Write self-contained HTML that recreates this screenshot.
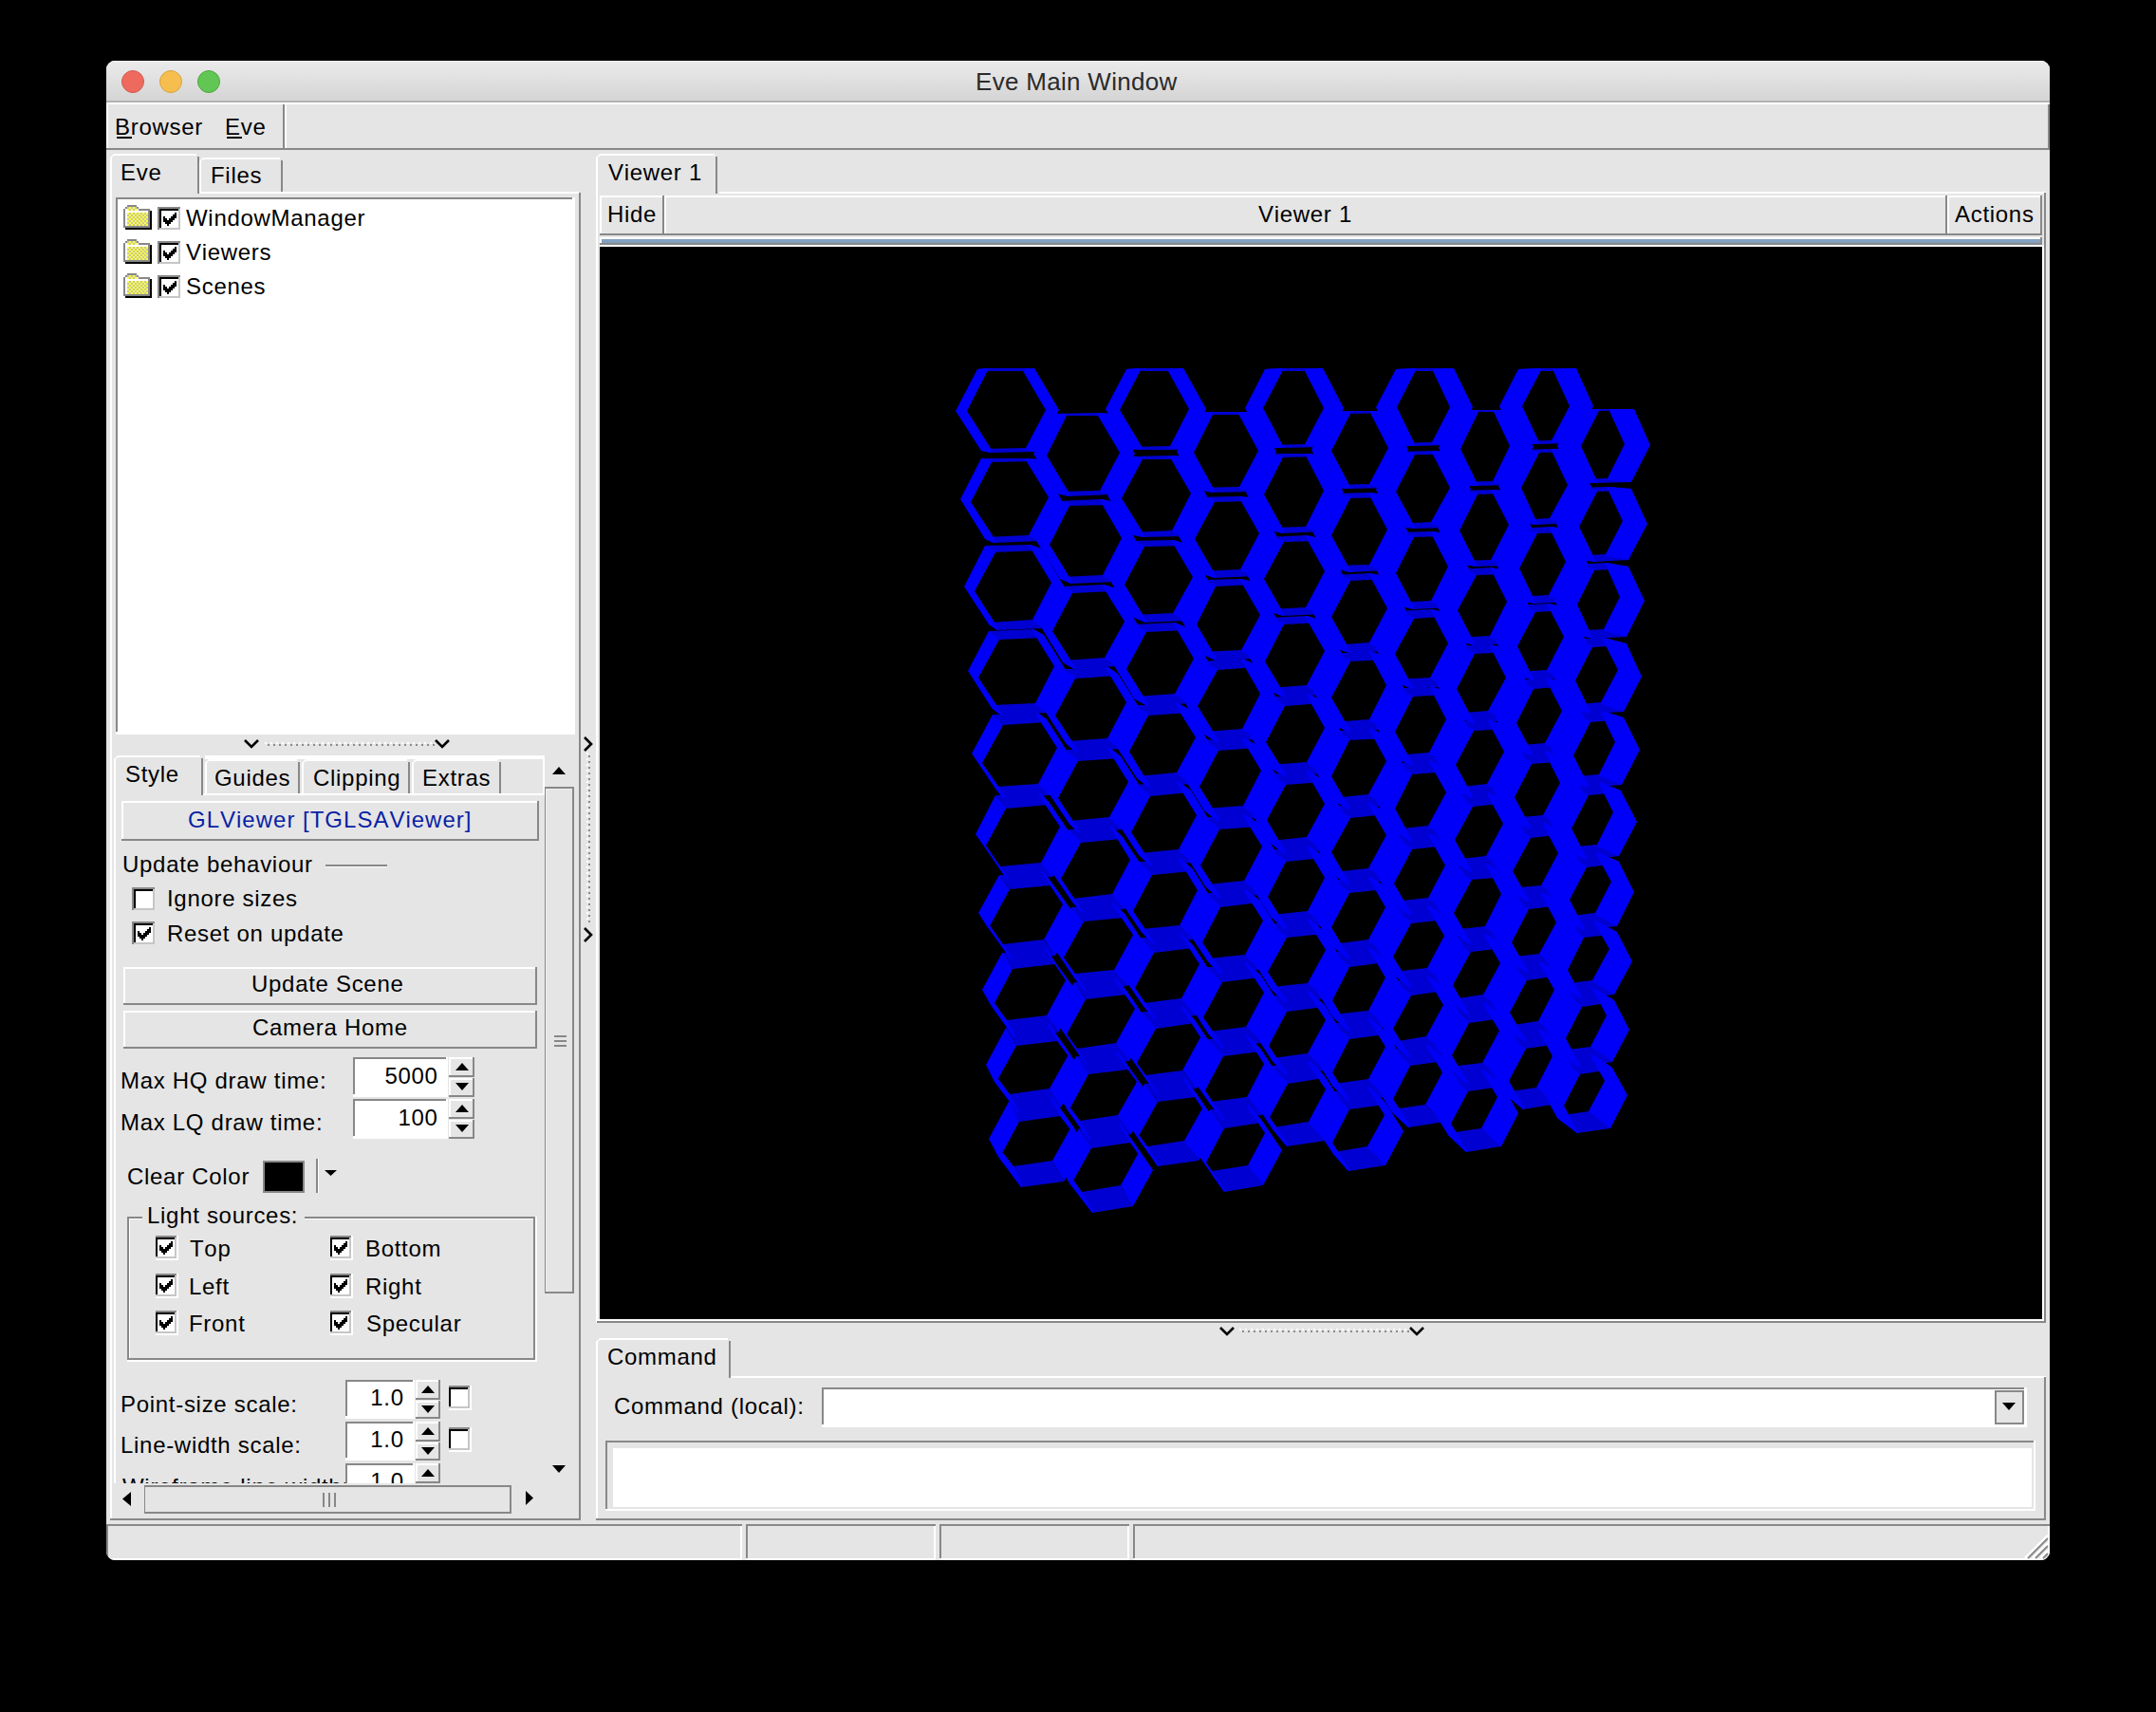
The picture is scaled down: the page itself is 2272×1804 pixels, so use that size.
<!DOCTYPE html>
<html><head><meta charset="utf-8"><style>
html,body{margin:0;padding:0;background:#000;width:2272px;height:1804px;overflow:hidden}
#w{position:absolute;left:112px;top:64px;width:2048px;height:1580px;background:#e5e5e5;border-radius:9px;overflow:hidden}
#w div{position:absolute}
#w .t{font-family:"Liberation Sans",sans-serif;line-height:24px;white-space:pre;font-kerning:none;height:30px}
</style></head><body><div id="w">
<div style="left:0px;top:0px;width:2048px;height:43px;background:linear-gradient(#ebebeb,#d4d4d4);"></div>
<div style="left:0px;top:0px;width:2048px;height:1px;background:#f6f6f6;"></div>
<div style="left:0px;top:42px;width:2048px;height:2px;background:#b1b1b1;"></div>
<div style="left:16px;top:10px;width:22px;height:22px;border-radius:50%;background:#ee6a5e;border:1px solid #d25a4d"></div>
<div style="left:56px;top:10px;width:22px;height:22px;border-radius:50%;background:#f5be4f;border:1px solid #d9a33c"></div>
<div style="left:96px;top:10px;width:22px;height:22px;border-radius:50%;background:#62c654;border:1px solid #4fa840"></div>
<div class="t" style="left:916px;top:10px;font-size:26px;color:#2b2b2b;letter-spacing:0.3px;">Eve Main Window</div>
<div style="left:0px;top:44px;width:2048px;height:2px;background:#ffffff;"></div>
<div style="left:0px;top:44px;width:2px;height:50px;background:#ffffff;"></div>
<div style="left:0px;top:92px;width:2048px;height:2px;background:#888888;"></div>
<div style="left:186px;top:46px;width:2px;height:46px;background:#888888;"></div>
<div style="left:188px;top:46px;width:2px;height:46px;background:#ffffff;"></div>
<div style="left:2046px;top:46px;width:2px;height:48px;background:#888888;"></div>
<div class="t" style="left:9px;top:58px;font-size:24px;color:#000;letter-spacing:0.7px;">Browser</div>
<div style="left:11px;top:80px;width:16px;height:2px;background:#000;"></div>
<div class="t" style="left:125px;top:58px;font-size:24px;color:#000;letter-spacing:0.7px;">Eve</div>
<div style="left:127px;top:80px;width:16px;height:2px;background:#000;"></div>
<svg style="position:absolute;left:4px;top:98px" width="94" height="42" viewBox="0 0 94 42" shape-rendering="crispEdges"><rect x="0" y="0" width="94" height="42" fill="#e5e5e5"/><rect x="4" y="0" width="87" height="2" fill="#fff"/><rect x="0" y="4" width="2" height="38" fill="#fff"/><path d="M0 4L4 0L4 2L2 4Z" fill="#fff" shape-rendering="geometricPrecision"/><rect x="92" y="3" width="2" height="39" fill="#888888"/></svg>
<svg style="position:absolute;left:98px;top:102px" width="88" height="38" viewBox="0 0 88 38" shape-rendering="crispEdges"><rect x="0" y="0" width="88" height="38" fill="#e5e5e5"/><rect x="4" y="0" width="81" height="2" fill="#fff"/><rect x="0" y="4" width="2" height="34" fill="#fff"/><path d="M0 4L4 0L4 2L2 4Z" fill="#fff" shape-rendering="geometricPrecision"/><rect x="86" y="3" width="2" height="35" fill="#888888"/></svg>
<div class="t" style="left:15px;top:106px;font-size:24px;color:#000;letter-spacing:0.7px;">Eve</div>
<div class="t" style="left:110px;top:109px;font-size:24px;color:#000;letter-spacing:0.7px;">Files</div>
<div style="left:98px;top:138px;width:400px;height:2px;background:#ffffff;"></div>
<div style="left:4px;top:140px;width:2px;height:1398px;background:#ffffff;"></div>
<div style="left:498px;top:139px;width:2px;height:1399px;background:#888888;"></div>
<div style="left:4px;top:1536px;width:496px;height:2px;background:#888888;"></div>
<div style="left:10px;top:144px;width:484px;height:566px;background:#fff;"></div>
<div style="left:10px;top:144px;width:481px;height:2px;background:#888888;"></div>
<div style="left:10px;top:144px;width:2px;height:563px;background:#888888;"></div>
<svg style="position:absolute;left:18px;top:152px" width="30" height="26" viewBox="0 0 30 26" shape-rendering="crispEdges"><defs><pattern id="ck" x="0" y="0" width="4" height="4" patternUnits="userSpaceOnUse"><rect width="4" height="4" fill="#c8c8a0"/><rect width="2" height="2" fill="#ffff40"/><rect x="2" y="2" width="2" height="2" fill="#ffff40"/></pattern></defs><rect x="4" y="0" width="10" height="2" fill="#888888"/><rect x="2" y="2" width="2" height="2" fill="#888888"/><rect x="14" y="2" width="2" height="2" fill="#888888"/><rect x="4" y="2" width="10" height="4" fill="url(#ck)"/><rect x="16" y="4" width="12" height="2" fill="#888888"/><rect x="0" y="4" width="2" height="20" fill="#888888"/><rect x="2" y="6" width="24" height="2" fill="#fff"/><rect x="2" y="6" width="2" height="16" fill="#fff"/><rect x="4" y="8" width="22" height="14" fill="url(#ck)"/><rect x="26" y="4" width="2" height="20" fill="#888888"/><rect x="0" y="22" width="28" height="2" fill="#888888"/><rect x="28" y="6" width="2" height="20" fill="#000"/><rect x="2" y="24" width="28" height="2" fill="#000"/></svg>
<svg style="position:absolute;left:54px;top:154px" width="24" height="24" viewBox="0 0 24 24" shape-rendering="crispEdges"><rect x="0" y="0" width="24" height="24" fill="#fff"/><rect x="0" y="0" width="24" height="2" fill="#888888"/><rect x="0" y="0" width="2" height="24" fill="#888888"/><rect x="2" y="2" width="20" height="2" fill="#000"/><rect x="2" y="2" width="2" height="20" fill="#000"/><rect x="22" y="2" width="2" height="22" fill="#c6c6c6"/><rect x="2" y="22" width="22" height="2" fill="#c6c6c6"/><path d="M18 6h2v2h-2zM16 8h4v2h-4zM6 10h2v2h-2zM14 10h6v2h-6zM6 12h4v2h-4zM12 12h6v2h-6zM6 14h10v2h-10zM8 16h6v2h-6zM10 18h2v2h-2z" fill="#000"/></svg>
<div class="t" style="left:84px;top:154px;font-size:24px;color:#000;letter-spacing:0.7px;">WindowManager</div>
<svg style="position:absolute;left:18px;top:188px" width="30" height="26" viewBox="0 0 30 26" shape-rendering="crispEdges"><rect x="4" y="0" width="10" height="2" fill="#888888"/><rect x="2" y="2" width="2" height="2" fill="#888888"/><rect x="14" y="2" width="2" height="2" fill="#888888"/><rect x="4" y="2" width="10" height="4" fill="url(#ck)"/><rect x="16" y="4" width="12" height="2" fill="#888888"/><rect x="0" y="4" width="2" height="20" fill="#888888"/><rect x="2" y="6" width="24" height="2" fill="#fff"/><rect x="2" y="6" width="2" height="16" fill="#fff"/><rect x="4" y="8" width="22" height="14" fill="url(#ck)"/><rect x="26" y="4" width="2" height="20" fill="#888888"/><rect x="0" y="22" width="28" height="2" fill="#888888"/><rect x="28" y="6" width="2" height="20" fill="#000"/><rect x="2" y="24" width="28" height="2" fill="#000"/></svg>
<svg style="position:absolute;left:54px;top:190px" width="24" height="24" viewBox="0 0 24 24" shape-rendering="crispEdges"><rect x="0" y="0" width="24" height="24" fill="#fff"/><rect x="0" y="0" width="24" height="2" fill="#888888"/><rect x="0" y="0" width="2" height="24" fill="#888888"/><rect x="2" y="2" width="20" height="2" fill="#000"/><rect x="2" y="2" width="2" height="20" fill="#000"/><rect x="22" y="2" width="2" height="22" fill="#c6c6c6"/><rect x="2" y="22" width="22" height="2" fill="#c6c6c6"/><path d="M18 6h2v2h-2zM16 8h4v2h-4zM6 10h2v2h-2zM14 10h6v2h-6zM6 12h4v2h-4zM12 12h6v2h-6zM6 14h10v2h-10zM8 16h6v2h-6zM10 18h2v2h-2z" fill="#000"/></svg>
<div class="t" style="left:84px;top:190px;font-size:24px;color:#000;letter-spacing:0.7px;">Viewers</div>
<svg style="position:absolute;left:18px;top:224px" width="30" height="26" viewBox="0 0 30 26" shape-rendering="crispEdges"><rect x="4" y="0" width="10" height="2" fill="#888888"/><rect x="2" y="2" width="2" height="2" fill="#888888"/><rect x="14" y="2" width="2" height="2" fill="#888888"/><rect x="4" y="2" width="10" height="4" fill="url(#ck)"/><rect x="16" y="4" width="12" height="2" fill="#888888"/><rect x="0" y="4" width="2" height="20" fill="#888888"/><rect x="2" y="6" width="24" height="2" fill="#fff"/><rect x="2" y="6" width="2" height="16" fill="#fff"/><rect x="4" y="8" width="22" height="14" fill="url(#ck)"/><rect x="26" y="4" width="2" height="20" fill="#888888"/><rect x="0" y="22" width="28" height="2" fill="#888888"/><rect x="28" y="6" width="2" height="20" fill="#000"/><rect x="2" y="24" width="28" height="2" fill="#000"/></svg>
<svg style="position:absolute;left:54px;top:226px" width="24" height="24" viewBox="0 0 24 24" shape-rendering="crispEdges"><rect x="0" y="0" width="24" height="24" fill="#fff"/><rect x="0" y="0" width="24" height="2" fill="#888888"/><rect x="0" y="0" width="2" height="24" fill="#888888"/><rect x="2" y="2" width="20" height="2" fill="#000"/><rect x="2" y="2" width="2" height="20" fill="#000"/><rect x="22" y="2" width="2" height="22" fill="#c6c6c6"/><rect x="2" y="22" width="22" height="2" fill="#c6c6c6"/><path d="M18 6h2v2h-2zM16 8h4v2h-4zM6 10h2v2h-2zM14 10h6v2h-6zM6 12h4v2h-4zM12 12h6v2h-6zM6 14h10v2h-10zM8 16h6v2h-6zM10 18h2v2h-2z" fill="#000"/></svg>
<div class="t" style="left:84px;top:226px;font-size:24px;color:#000;letter-spacing:0.7px;">Scenes</div>
<svg style="position:absolute;left:145px;top:715px" width="16" height="10" viewBox="0 0 16 10" shape-rendering="crispEdges"><path d="M1 1L8 8L15 1" stroke="#000" stroke-width="2.6" fill="none" shape-rendering="geometricPrecision"/></svg>
<svg style="position:absolute;left:346px;top:715px" width="16" height="10" viewBox="0 0 16 10" shape-rendering="crispEdges"><path d="M1 1L8 8L15 1" stroke="#000" stroke-width="2.6" fill="none" shape-rendering="geometricPrecision"/></svg>
<svg style="position:absolute;left:167px;top:718px" width="182" height="4" viewBox="0 0 182 4" shape-rendering="crispEdges"><rect x="0" y="0" width="2" height="2" fill="#fff"/><rect x="3" y="2" width="2" height="2" fill="#8c8c8c"/><rect x="6" y="0" width="2" height="2" fill="#fff"/><rect x="9" y="2" width="2" height="2" fill="#8c8c8c"/><rect x="12" y="0" width="2" height="2" fill="#fff"/><rect x="15" y="2" width="2" height="2" fill="#8c8c8c"/><rect x="18" y="0" width="2" height="2" fill="#fff"/><rect x="21" y="2" width="2" height="2" fill="#8c8c8c"/><rect x="24" y="0" width="2" height="2" fill="#fff"/><rect x="27" y="2" width="2" height="2" fill="#8c8c8c"/><rect x="30" y="0" width="2" height="2" fill="#fff"/><rect x="33" y="2" width="2" height="2" fill="#8c8c8c"/><rect x="36" y="0" width="2" height="2" fill="#fff"/><rect x="39" y="2" width="2" height="2" fill="#8c8c8c"/><rect x="42" y="0" width="2" height="2" fill="#fff"/><rect x="45" y="2" width="2" height="2" fill="#8c8c8c"/><rect x="48" y="0" width="2" height="2" fill="#fff"/><rect x="51" y="2" width="2" height="2" fill="#8c8c8c"/><rect x="54" y="0" width="2" height="2" fill="#fff"/><rect x="57" y="2" width="2" height="2" fill="#8c8c8c"/><rect x="60" y="0" width="2" height="2" fill="#fff"/><rect x="63" y="2" width="2" height="2" fill="#8c8c8c"/><rect x="66" y="0" width="2" height="2" fill="#fff"/><rect x="69" y="2" width="2" height="2" fill="#8c8c8c"/><rect x="72" y="0" width="2" height="2" fill="#fff"/><rect x="75" y="2" width="2" height="2" fill="#8c8c8c"/><rect x="78" y="0" width="2" height="2" fill="#fff"/><rect x="81" y="2" width="2" height="2" fill="#8c8c8c"/><rect x="84" y="0" width="2" height="2" fill="#fff"/><rect x="87" y="2" width="2" height="2" fill="#8c8c8c"/><rect x="90" y="0" width="2" height="2" fill="#fff"/><rect x="93" y="2" width="2" height="2" fill="#8c8c8c"/><rect x="96" y="0" width="2" height="2" fill="#fff"/><rect x="99" y="2" width="2" height="2" fill="#8c8c8c"/><rect x="102" y="0" width="2" height="2" fill="#fff"/><rect x="105" y="2" width="2" height="2" fill="#8c8c8c"/><rect x="108" y="0" width="2" height="2" fill="#fff"/><rect x="111" y="2" width="2" height="2" fill="#8c8c8c"/><rect x="114" y="0" width="2" height="2" fill="#fff"/><rect x="117" y="2" width="2" height="2" fill="#8c8c8c"/><rect x="120" y="0" width="2" height="2" fill="#fff"/><rect x="123" y="2" width="2" height="2" fill="#8c8c8c"/><rect x="126" y="0" width="2" height="2" fill="#fff"/><rect x="129" y="2" width="2" height="2" fill="#8c8c8c"/><rect x="132" y="0" width="2" height="2" fill="#fff"/><rect x="135" y="2" width="2" height="2" fill="#8c8c8c"/><rect x="138" y="0" width="2" height="2" fill="#fff"/><rect x="141" y="2" width="2" height="2" fill="#8c8c8c"/><rect x="144" y="0" width="2" height="2" fill="#fff"/><rect x="147" y="2" width="2" height="2" fill="#8c8c8c"/><rect x="150" y="0" width="2" height="2" fill="#fff"/><rect x="153" y="2" width="2" height="2" fill="#8c8c8c"/><rect x="156" y="0" width="2" height="2" fill="#fff"/><rect x="159" y="2" width="2" height="2" fill="#8c8c8c"/><rect x="162" y="0" width="2" height="2" fill="#fff"/><rect x="165" y="2" width="2" height="2" fill="#8c8c8c"/><rect x="168" y="0" width="2" height="2" fill="#fff"/><rect x="171" y="2" width="2" height="2" fill="#8c8c8c"/><rect x="174" y="0" width="2" height="2" fill="#fff"/><rect x="177" y="2" width="2" height="2" fill="#8c8c8c"/></svg>
<div style="left:104px;top:732px;width:358px;height:4px;background:#ffffff;"></div>
<div style="left:460px;top:732px;width:2px;height:42px;background:#ffffff;"></div>
<div style="left:102px;top:772px;width:360px;height:2px;background:#ffffff;"></div>
<svg style="position:absolute;left:8px;top:732px" width="94" height="42" viewBox="0 0 94 42" shape-rendering="crispEdges"><rect x="0" y="0" width="94" height="42" fill="#e5e5e5"/><rect x="4" y="0" width="87" height="2" fill="#fff"/><rect x="0" y="4" width="2" height="38" fill="#fff"/><path d="M0 4L4 0L4 2L2 4Z" fill="#fff" shape-rendering="geometricPrecision"/><rect x="92" y="3" width="2" height="39" fill="#888888"/></svg>
<svg style="position:absolute;left:104px;top:736px" width="100" height="36" viewBox="0 0 100 36" shape-rendering="crispEdges"><rect x="0" y="0" width="100" height="36" fill="#e5e5e5"/><rect x="4" y="0" width="93" height="2" fill="#fff"/><rect x="0" y="4" width="2" height="32" fill="#fff"/><path d="M0 4L4 0L4 2L2 4Z" fill="#fff" shape-rendering="geometricPrecision"/><rect x="98" y="3" width="2" height="33" fill="#888888"/></svg>
<svg style="position:absolute;left:206px;top:736px" width="114" height="36" viewBox="0 0 114 36" shape-rendering="crispEdges"><rect x="0" y="0" width="114" height="36" fill="#e5e5e5"/><rect x="4" y="0" width="107" height="2" fill="#fff"/><rect x="0" y="4" width="2" height="32" fill="#fff"/><path d="M0 4L4 0L4 2L2 4Z" fill="#fff" shape-rendering="geometricPrecision"/><rect x="112" y="3" width="2" height="33" fill="#888888"/></svg>
<svg style="position:absolute;left:322px;top:736px" width="94" height="36" viewBox="0 0 94 36" shape-rendering="crispEdges"><rect x="0" y="0" width="94" height="36" fill="#e5e5e5"/><rect x="4" y="0" width="87" height="2" fill="#fff"/><rect x="0" y="4" width="2" height="32" fill="#fff"/><path d="M0 4L4 0L4 2L2 4Z" fill="#fff" shape-rendering="geometricPrecision"/><rect x="92" y="3" width="2" height="33" fill="#888888"/></svg>
<div class="t" style="left:20px;top:740px;font-size:24px;color:#000;letter-spacing:0.7px;">Style</div>
<div class="t" style="left:114px;top:744px;font-size:24px;color:#000;letter-spacing:0.7px;">Guides</div>
<div class="t" style="left:218px;top:744px;font-size:24px;color:#000;letter-spacing:0.7px;">Clipping</div>
<div class="t" style="left:333px;top:744px;font-size:24px;color:#000;letter-spacing:0.7px;">Extras</div>
<div style="left:8px;top:774px;width:2px;height:725px;background:#ffffff;"></div>
<div style="left:16px;top:780px;width:440px;height:2px;background:#ffffff;"></div>
<div style="left:16px;top:780px;width:2px;height:42px;background:#ffffff;"></div>
<div style="left:16px;top:820px;width:440px;height:2px;background:#888888;"></div>
<div style="left:454px;top:780px;width:2px;height:42px;background:#888888;"></div>
<div class="t" style="left:86px;top:788px;font-size:24px;color:#0a1fa6;letter-spacing:1.0px;">GLViewer [TGLSAViewer]</div>
<div class="t" style="left:17px;top:835px;font-size:24px;color:#000;letter-spacing:0.7px;">Update behaviour</div>
<div style="left:231px;top:847px;width:65px;height:2px;background:#888888;"></div>
<div style="left:231px;top:849px;width:65px;height:1px;background:#ffffff;"></div>
<svg style="position:absolute;left:27px;top:871px" width="24" height="24" viewBox="0 0 24 24" shape-rendering="crispEdges"><rect x="0" y="0" width="24" height="24" fill="#fff"/><rect x="0" y="0" width="24" height="2" fill="#888888"/><rect x="0" y="0" width="2" height="24" fill="#888888"/><rect x="2" y="2" width="20" height="2" fill="#000"/><rect x="2" y="2" width="2" height="20" fill="#000"/><rect x="22" y="2" width="2" height="22" fill="#c6c6c6"/><rect x="2" y="22" width="22" height="2" fill="#c6c6c6"/></svg>
<div class="t" style="left:64px;top:871px;font-size:24px;color:#000;letter-spacing:0.7px;">Ignore sizes</div>
<svg style="position:absolute;left:27px;top:907px" width="24" height="24" viewBox="0 0 24 24" shape-rendering="crispEdges"><rect x="0" y="0" width="24" height="24" fill="#fff"/><rect x="0" y="0" width="24" height="2" fill="#888888"/><rect x="0" y="0" width="2" height="24" fill="#888888"/><rect x="2" y="2" width="20" height="2" fill="#000"/><rect x="2" y="2" width="2" height="20" fill="#000"/><rect x="22" y="2" width="2" height="22" fill="#c6c6c6"/><rect x="2" y="22" width="22" height="2" fill="#c6c6c6"/><path d="M18 6h2v2h-2zM16 8h4v2h-4zM6 10h2v2h-2zM14 10h6v2h-6zM6 12h4v2h-4zM12 12h6v2h-6zM6 14h10v2h-10zM8 16h6v2h-6zM10 18h2v2h-2z" fill="#000"/></svg>
<div class="t" style="left:64px;top:908px;font-size:24px;color:#000;letter-spacing:0.7px;">Reset on update</div>
<div style="left:18px;top:955px;width:436px;height:2px;background:#ffffff;"></div>
<div style="left:18px;top:955px;width:2px;height:40px;background:#ffffff;"></div>
<div style="left:18px;top:993px;width:436px;height:2px;background:#888888;"></div>
<div style="left:452px;top:955px;width:2px;height:40px;background:#888888;"></div>
<div class="t" style="left:153px;top:961px;font-size:24px;color:#000;letter-spacing:0.7px;">Update Scene</div>
<div style="left:18px;top:1001px;width:436px;height:2px;background:#ffffff;"></div>
<div style="left:18px;top:1001px;width:2px;height:40px;background:#ffffff;"></div>
<div style="left:18px;top:1039px;width:436px;height:2px;background:#888888;"></div>
<div style="left:452px;top:1001px;width:2px;height:40px;background:#888888;"></div>
<div class="t" style="left:154px;top:1007px;font-size:24px;color:#000;letter-spacing:0.7px;">Camera Home</div>
<div class="t" style="left:15px;top:1063px;font-size:24px;color:#000;letter-spacing:0.7px;">Max HQ draw time:</div>
<div style="left:260px;top:1050px;width:100px;height:42px;background:#fff;"></div>
<div style="left:260px;top:1050px;width:98px;height:2px;background:#888888;"></div>
<div style="left:260px;top:1050px;width:2px;height:39px;background:#888888;"></div>
<div class="t" style="left:49.6px;width:300px;text-align:right;top:1058px;font-size:24px;color:#000;letter-spacing:0.7px;">5000</div>
<div style="left:361px;top:1050px;width:27px;height:21px;background:#e5e5e5;"></div>
<div style="left:361px;top:1050px;width:27px;height:2px;background:#ffffff;"></div>
<div style="left:361px;top:1050px;width:2px;height:21px;background:#ffffff;"></div>
<div style="left:361px;top:1069px;width:27px;height:2px;background:#888888;"></div>
<div style="left:386px;top:1050px;width:2px;height:21px;background:#888888;"></div>
<div style="left:361px;top:1072px;width:27px;height:20px;background:#e5e5e5;"></div>
<div style="left:361px;top:1072px;width:27px;height:2px;background:#ffffff;"></div>
<div style="left:361px;top:1072px;width:2px;height:20px;background:#ffffff;"></div>
<div style="left:361px;top:1090px;width:27px;height:2px;background:#888888;"></div>
<div style="left:386px;top:1072px;width:2px;height:20px;background:#888888;"></div>
<svg style="position:absolute;left:367.5px;top:1056px" width="14" height="8" viewBox="0 0 14 8" shape-rendering="crispEdges"><path d="M0 8L7.0 0L14 8Z" fill="#000" shape-rendering="geometricPrecision"/></svg>
<svg style="position:absolute;left:367.5px;top:1077px" width="14" height="8" viewBox="0 0 14 8" shape-rendering="crispEdges"><path d="M0 0L14 0L7.0 8Z" fill="#000" shape-rendering="geometricPrecision"/></svg>
<div class="t" style="left:15px;top:1107px;font-size:24px;color:#000;letter-spacing:0.7px;">Max LQ draw time:</div>
<div style="left:260px;top:1094px;width:100px;height:42px;background:#fff;"></div>
<div style="left:260px;top:1094px;width:98px;height:2px;background:#888888;"></div>
<div style="left:260px;top:1094px;width:2px;height:39px;background:#888888;"></div>
<div class="t" style="left:49.6px;width:300px;text-align:right;top:1102px;font-size:24px;color:#000;letter-spacing:0.7px;">100</div>
<div style="left:361px;top:1094px;width:27px;height:21px;background:#e5e5e5;"></div>
<div style="left:361px;top:1094px;width:27px;height:2px;background:#ffffff;"></div>
<div style="left:361px;top:1094px;width:2px;height:21px;background:#ffffff;"></div>
<div style="left:361px;top:1113px;width:27px;height:2px;background:#888888;"></div>
<div style="left:386px;top:1094px;width:2px;height:21px;background:#888888;"></div>
<div style="left:361px;top:1116px;width:27px;height:20px;background:#e5e5e5;"></div>
<div style="left:361px;top:1116px;width:27px;height:2px;background:#ffffff;"></div>
<div style="left:361px;top:1116px;width:2px;height:20px;background:#ffffff;"></div>
<div style="left:361px;top:1134px;width:27px;height:2px;background:#888888;"></div>
<div style="left:386px;top:1116px;width:2px;height:20px;background:#888888;"></div>
<svg style="position:absolute;left:367.5px;top:1100px" width="14" height="8" viewBox="0 0 14 8" shape-rendering="crispEdges"><path d="M0 8L7.0 0L14 8Z" fill="#000" shape-rendering="geometricPrecision"/></svg>
<svg style="position:absolute;left:367.5px;top:1121px" width="14" height="8" viewBox="0 0 14 8" shape-rendering="crispEdges"><path d="M0 0L14 0L7.0 8Z" fill="#000" shape-rendering="geometricPrecision"/></svg>
<div class="t" style="left:22px;top:1164px;font-size:24px;color:#000;letter-spacing:0.7px;">Clear Color</div>
<div style="left:165px;top:1159px;width:44px;height:34px;background:#888888;"></div>
<div style="left:167px;top:1161px;width:40px;height:30px;background:#000;"></div>
<div style="left:221px;top:1157px;width:2px;height:36px;background:#888888;"></div>
<div style="left:223px;top:1157px;width:1px;height:36px;background:#ffffff;"></div>
<svg style="position:absolute;left:230px;top:1169px" width="13" height="6" viewBox="0 0 13 6" shape-rendering="crispEdges"><path d="M0 0L13 0L6.5 6Z" fill="#000" shape-rendering="geometricPrecision"/></svg>
<div style="left:22px;top:1218px;width:430px;height:2px;background:#888888;"></div>
<div style="left:22px;top:1220px;width:430px;height:1px;background:#ffffff;"></div>
<div style="left:22px;top:1218px;width:2px;height:151px;background:#888888;"></div>
<div style="left:24px;top:1220px;width:1px;height:149px;background:#ffffff;"></div>
<div style="left:22px;top:1367px;width:430px;height:2px;background:#888888;"></div>
<div style="left:22px;top:1369px;width:432px;height:2px;background:#ffffff;"></div>
<div style="left:450px;top:1218px;width:2px;height:151px;background:#888888;"></div>
<div style="left:452px;top:1218px;width:2px;height:153px;background:#ffffff;"></div>
<div style="left:38px;top:1206px;width:171px;height:20px;background:#e5e5e5;"></div>
<div class="t" style="left:43px;top:1205px;font-size:24px;color:#000;letter-spacing:0.7px;">Light sources:</div>
<svg style="position:absolute;left:52px;top:1238px" width="24" height="26" viewBox="0 0 24 26" shape-rendering="crispEdges"><rect x="0" y="0" width="24" height="26" fill="#fff"/><rect x="0" y="0" width="22" height="2" fill="#888888"/><rect x="0" y="2" width="20" height="2" fill="#000"/><rect x="0" y="2" width="2" height="20" fill="#000"/><rect x="20" y="2" width="2" height="22" fill="#c6c6c6"/><rect x="0" y="22" width="22" height="2" fill="#c6c6c6"/><rect x="22" y="0" width="2" height="26" fill="#fff"/><rect x="0" y="24" width="24" height="2" fill="#fff"/><path d="M16 6h2v2h-2zM14 8h4v2h-4zM4 10h2v2h-2zM12 10h6v2h-6zM4 12h4v2h-4zM10 12h6v2h-6zM4 14h10v2h-10zM6 16h6v2h-6zM8 18h2v2h-2z" fill="#000"/></svg>
<div class="t" style="left:88px;top:1240px;font-size:24px;color:#000;letter-spacing:0.7px;">Top</div>
<svg style="position:absolute;left:236px;top:1238px" width="24" height="26" viewBox="0 0 24 26" shape-rendering="crispEdges"><rect x="0" y="0" width="24" height="26" fill="#fff"/><rect x="0" y="0" width="22" height="2" fill="#888888"/><rect x="0" y="2" width="20" height="2" fill="#000"/><rect x="0" y="2" width="2" height="20" fill="#000"/><rect x="20" y="2" width="2" height="22" fill="#c6c6c6"/><rect x="0" y="22" width="22" height="2" fill="#c6c6c6"/><rect x="22" y="0" width="2" height="26" fill="#fff"/><rect x="0" y="24" width="24" height="2" fill="#fff"/><path d="M16 6h2v2h-2zM14 8h4v2h-4zM4 10h2v2h-2zM12 10h6v2h-6zM4 12h4v2h-4zM10 12h6v2h-6zM4 14h10v2h-10zM6 16h6v2h-6zM8 18h2v2h-2z" fill="#000"/></svg>
<div class="t" style="left:273px;top:1240px;font-size:24px;color:#000;letter-spacing:0.7px;">Bottom</div>
<svg style="position:absolute;left:52px;top:1278px" width="24" height="26" viewBox="0 0 24 26" shape-rendering="crispEdges"><rect x="0" y="0" width="24" height="26" fill="#fff"/><rect x="0" y="0" width="22" height="2" fill="#888888"/><rect x="0" y="2" width="20" height="2" fill="#000"/><rect x="0" y="2" width="2" height="20" fill="#000"/><rect x="20" y="2" width="2" height="22" fill="#c6c6c6"/><rect x="0" y="22" width="22" height="2" fill="#c6c6c6"/><rect x="22" y="0" width="2" height="26" fill="#fff"/><rect x="0" y="24" width="24" height="2" fill="#fff"/><path d="M16 6h2v2h-2zM14 8h4v2h-4zM4 10h2v2h-2zM12 10h6v2h-6zM4 12h4v2h-4zM10 12h6v2h-6zM4 14h10v2h-10zM6 16h6v2h-6zM8 18h2v2h-2z" fill="#000"/></svg>
<div class="t" style="left:87px;top:1280px;font-size:24px;color:#000;letter-spacing:0.7px;">Left</div>
<svg style="position:absolute;left:236px;top:1278px" width="24" height="26" viewBox="0 0 24 26" shape-rendering="crispEdges"><rect x="0" y="0" width="24" height="26" fill="#fff"/><rect x="0" y="0" width="22" height="2" fill="#888888"/><rect x="0" y="2" width="20" height="2" fill="#000"/><rect x="0" y="2" width="2" height="20" fill="#000"/><rect x="20" y="2" width="2" height="22" fill="#c6c6c6"/><rect x="0" y="22" width="22" height="2" fill="#c6c6c6"/><rect x="22" y="0" width="2" height="26" fill="#fff"/><rect x="0" y="24" width="24" height="2" fill="#fff"/><path d="M16 6h2v2h-2zM14 8h4v2h-4zM4 10h2v2h-2zM12 10h6v2h-6zM4 12h4v2h-4zM10 12h6v2h-6zM4 14h10v2h-10zM6 16h6v2h-6zM8 18h2v2h-2z" fill="#000"/></svg>
<div class="t" style="left:273px;top:1280px;font-size:24px;color:#000;letter-spacing:0.7px;">Right</div>
<svg style="position:absolute;left:52px;top:1317px" width="24" height="26" viewBox="0 0 24 26" shape-rendering="crispEdges"><rect x="0" y="0" width="24" height="26" fill="#fff"/><rect x="0" y="0" width="22" height="2" fill="#888888"/><rect x="0" y="2" width="20" height="2" fill="#000"/><rect x="0" y="2" width="2" height="20" fill="#000"/><rect x="20" y="2" width="2" height="22" fill="#c6c6c6"/><rect x="0" y="22" width="22" height="2" fill="#c6c6c6"/><rect x="22" y="0" width="2" height="26" fill="#fff"/><rect x="0" y="24" width="24" height="2" fill="#fff"/><path d="M16 6h2v2h-2zM14 8h4v2h-4zM4 10h2v2h-2zM12 10h6v2h-6zM4 12h4v2h-4zM10 12h6v2h-6zM4 14h10v2h-10zM6 16h6v2h-6zM8 18h2v2h-2z" fill="#000"/></svg>
<div class="t" style="left:87px;top:1319px;font-size:24px;color:#000;letter-spacing:0.7px;">Front</div>
<svg style="position:absolute;left:236px;top:1317px" width="24" height="26" viewBox="0 0 24 26" shape-rendering="crispEdges"><rect x="0" y="0" width="24" height="26" fill="#fff"/><rect x="0" y="0" width="22" height="2" fill="#888888"/><rect x="0" y="2" width="20" height="2" fill="#000"/><rect x="0" y="2" width="2" height="20" fill="#000"/><rect x="20" y="2" width="2" height="22" fill="#c6c6c6"/><rect x="0" y="22" width="22" height="2" fill="#c6c6c6"/><rect x="22" y="0" width="2" height="26" fill="#fff"/><rect x="0" y="24" width="24" height="2" fill="#fff"/><path d="M16 6h2v2h-2zM14 8h4v2h-4zM4 10h2v2h-2zM12 10h6v2h-6zM4 12h4v2h-4zM10 12h6v2h-6zM4 14h10v2h-10zM6 16h6v2h-6zM8 18h2v2h-2z" fill="#000"/></svg>
<div class="t" style="left:274px;top:1319px;font-size:24px;color:#000;letter-spacing:0.7px;">Specular</div>
<div style="left:6px;top:1376px;width:455px;height:123px;overflow:hidden">
<div class="t" style="left:9px;top:28px;font-size:24px;color:#000;letter-spacing:0.7px;">Point-size scale:</div>
<div style="left:246px;top:14px;width:73px;height:41px;background:#fff;"></div>
<div style="left:246px;top:14px;width:71px;height:2px;background:#888888;"></div>
<div style="left:246px;top:14px;width:2px;height:38px;background:#888888;"></div>
<div class="t" style="left:7.7px;width:300px;text-align:right;top:21px;font-size:24px;color:#000;letter-spacing:0.7px;">1.0</div>
<div style="left:320px;top:14px;width:26px;height:20.5px;background:#e5e5e5;"></div>
<div style="left:320px;top:14px;width:26px;height:2px;background:#ffffff;"></div>
<div style="left:320px;top:14px;width:2px;height:20.5px;background:#ffffff;"></div>
<div style="left:320px;top:32.5px;width:26px;height:2px;background:#888888;"></div>
<div style="left:344px;top:14px;width:2px;height:20.5px;background:#888888;"></div>
<div style="left:320px;top:35.5px;width:26px;height:19.5px;background:#e5e5e5;"></div>
<div style="left:320px;top:35.5px;width:26px;height:2px;background:#ffffff;"></div>
<div style="left:320px;top:35.5px;width:2px;height:19.5px;background:#ffffff;"></div>
<div style="left:320px;top:53px;width:26px;height:2px;background:#888888;"></div>
<div style="left:344px;top:35.5px;width:2px;height:19.5px;background:#888888;"></div>
<svg style="position:absolute;left:326px;top:20px" width="14" height="8" viewBox="0 0 14 8" shape-rendering="crispEdges"><path d="M0 8L7.0 0L14 8Z" fill="#000" shape-rendering="geometricPrecision"/></svg>
<svg style="position:absolute;left:326px;top:40.5px" width="14" height="8" viewBox="0 0 14 8" shape-rendering="crispEdges"><path d="M0 0L14 0L7.0 8Z" fill="#000" shape-rendering="geometricPrecision"/></svg>
<svg style="position:absolute;left:355px;top:20px" width="24" height="26" viewBox="0 0 24 26" shape-rendering="crispEdges"><rect x="0" y="0" width="24" height="26" fill="#fff"/><rect x="0" y="0" width="22" height="2" fill="#888888"/><rect x="0" y="2" width="20" height="2" fill="#000"/><rect x="0" y="2" width="2" height="20" fill="#000"/><rect x="20" y="2" width="2" height="22" fill="#c6c6c6"/><rect x="0" y="22" width="22" height="2" fill="#c6c6c6"/><rect x="22" y="0" width="2" height="26" fill="#fff"/><rect x="0" y="24" width="24" height="2" fill="#fff"/></svg>
<div class="t" style="left:9px;top:71px;font-size:24px;color:#000;letter-spacing:0.7px;">Line-width scale:</div>
<div style="left:246px;top:58px;width:73px;height:41px;background:#fff;"></div>
<div style="left:246px;top:58px;width:71px;height:2px;background:#888888;"></div>
<div style="left:246px;top:58px;width:2px;height:38px;background:#888888;"></div>
<div class="t" style="left:7.7px;width:300px;text-align:right;top:65px;font-size:24px;color:#000;letter-spacing:0.7px;">1.0</div>
<div style="left:320px;top:58px;width:26px;height:20.5px;background:#e5e5e5;"></div>
<div style="left:320px;top:58px;width:26px;height:2px;background:#ffffff;"></div>
<div style="left:320px;top:58px;width:2px;height:20.5px;background:#ffffff;"></div>
<div style="left:320px;top:76.5px;width:26px;height:2px;background:#888888;"></div>
<div style="left:344px;top:58px;width:2px;height:20.5px;background:#888888;"></div>
<div style="left:320px;top:79.5px;width:26px;height:19.5px;background:#e5e5e5;"></div>
<div style="left:320px;top:79.5px;width:26px;height:2px;background:#ffffff;"></div>
<div style="left:320px;top:79.5px;width:2px;height:19.5px;background:#ffffff;"></div>
<div style="left:320px;top:97px;width:26px;height:2px;background:#888888;"></div>
<div style="left:344px;top:79.5px;width:2px;height:19.5px;background:#888888;"></div>
<svg style="position:absolute;left:326px;top:64px" width="14" height="8" viewBox="0 0 14 8" shape-rendering="crispEdges"><path d="M0 8L7.0 0L14 8Z" fill="#000" shape-rendering="geometricPrecision"/></svg>
<svg style="position:absolute;left:326px;top:84.5px" width="14" height="8" viewBox="0 0 14 8" shape-rendering="crispEdges"><path d="M0 0L14 0L7.0 8Z" fill="#000" shape-rendering="geometricPrecision"/></svg>
<svg style="position:absolute;left:355px;top:64px" width="24" height="26" viewBox="0 0 24 26" shape-rendering="crispEdges"><rect x="0" y="0" width="24" height="26" fill="#fff"/><rect x="0" y="0" width="22" height="2" fill="#888888"/><rect x="0" y="2" width="20" height="2" fill="#000"/><rect x="0" y="2" width="2" height="20" fill="#000"/><rect x="20" y="2" width="2" height="22" fill="#c6c6c6"/><rect x="0" y="22" width="22" height="2" fill="#c6c6c6"/><rect x="22" y="0" width="2" height="26" fill="#fff"/><rect x="0" y="24" width="24" height="2" fill="#fff"/></svg>
<div class="t" style="left:11px;top:115px;font-size:24px;color:#000;letter-spacing:0.7px;">Wireframe line width:</div>
<div style="left:246px;top:102px;width:73px;height:41px;background:#fff;"></div>
<div style="left:246px;top:102px;width:71px;height:2px;background:#888888;"></div>
<div style="left:246px;top:102px;width:2px;height:38px;background:#888888;"></div>
<div class="t" style="left:7.7px;width:300px;text-align:right;top:109px;font-size:24px;color:#000;letter-spacing:0.7px;">1.0</div>
<div style="left:320px;top:102px;width:26px;height:20.5px;background:#e5e5e5;"></div>
<div style="left:320px;top:102px;width:26px;height:2px;background:#ffffff;"></div>
<div style="left:320px;top:102px;width:2px;height:20.5px;background:#ffffff;"></div>
<div style="left:320px;top:120.5px;width:26px;height:2px;background:#888888;"></div>
<div style="left:344px;top:102px;width:2px;height:20.5px;background:#888888;"></div>
<div style="left:320px;top:123.5px;width:26px;height:19.5px;background:#e5e5e5;"></div>
<div style="left:320px;top:123.5px;width:26px;height:2px;background:#ffffff;"></div>
<div style="left:320px;top:123.5px;width:2px;height:19.5px;background:#ffffff;"></div>
<div style="left:320px;top:141px;width:26px;height:2px;background:#888888;"></div>
<div style="left:344px;top:123.5px;width:2px;height:19.5px;background:#888888;"></div>
<svg style="position:absolute;left:326px;top:108px" width="14" height="8" viewBox="0 0 14 8" shape-rendering="crispEdges"><path d="M0 8L7.0 0L14 8Z" fill="#000" shape-rendering="geometricPrecision"/></svg>
<svg style="position:absolute;left:326px;top:128.5px" width="14" height="8" viewBox="0 0 14 8" shape-rendering="crispEdges"><path d="M0 0L14 0L7.0 8Z" fill="#000" shape-rendering="geometricPrecision"/></svg>
</div>
<svg style="position:absolute;left:470px;top:744px" width="14" height="8" viewBox="0 0 14 8" shape-rendering="crispEdges"><path d="M0 8L7.0 0L14 8Z" fill="#000" shape-rendering="geometricPrecision"/></svg>
<div style="left:462px;top:765px;width:31px;height:534px;background:#888888;"></div>
<div style="left:463px;top:767px;width:28px;height:530px;background:#f0f0f0;"></div>
<div style="left:464px;top:768px;width:27px;height:529px;background:#e5e5e5;"></div>
<div style="left:472px;top:1027px;width:13px;height:2px;background:#888888;"></div>
<div style="left:472px;top:1032px;width:13px;height:2px;background:#888888;"></div>
<div style="left:472px;top:1037px;width:13px;height:2px;background:#888888;"></div>
<svg style="position:absolute;left:470px;top:1480px" width="14" height="8" viewBox="0 0 14 8" shape-rendering="crispEdges"><path d="M0 0L14 0L7.0 8Z" fill="#000" shape-rendering="geometricPrecision"/></svg>
<svg style="position:absolute;left:17px;top:1508px" width="9" height="15" viewBox="0 0 9 15" shape-rendering="crispEdges"><path d="M9 0L0 7.5L9 15Z" fill="#000" shape-rendering="geometricPrecision"/></svg>
<div style="left:40px;top:1501px;width:387px;height:30px;background:#888888;"></div>
<div style="left:41px;top:1503px;width:384px;height:26px;background:#e5e5e5;"></div>
<div style="left:228px;top:1509px;width:2px;height:15px;background:#888888;"></div>
<div style="left:234px;top:1509px;width:2px;height:15px;background:#888888;"></div>
<div style="left:240px;top:1509px;width:2px;height:15px;background:#888888;"></div>
<svg style="position:absolute;left:442px;top:1507px" width="8" height="15" viewBox="0 0 8 15" shape-rendering="crispEdges"><path d="M0 0L8 7.5L0 15Z" fill="#000" shape-rendering="geometricPrecision"/></svg>
<svg style="position:absolute;left:503px;top:712px" width="10" height="16" viewBox="0 0 10 16" shape-rendering="crispEdges"><path d="M1 1L8 8L1 15" stroke="#000" stroke-width="2.6" fill="none" shape-rendering="geometricPrecision"/></svg>
<svg style="position:absolute;left:503px;top:913px" width="10" height="16" viewBox="0 0 10 16" shape-rendering="crispEdges"><path d="M1 1L8 8L1 15" stroke="#000" stroke-width="2.6" fill="none" shape-rendering="geometricPrecision"/></svg>
<svg style="position:absolute;left:506px;top:729px" width="4" height="181" viewBox="0 0 4 181" shape-rendering="crispEdges"><rect x="0" y="0" width="2" height="2" fill="#fff"/><rect x="2" y="3" width="2" height="2" fill="#8c8c8c"/><rect x="0" y="6" width="2" height="2" fill="#fff"/><rect x="2" y="9" width="2" height="2" fill="#8c8c8c"/><rect x="0" y="12" width="2" height="2" fill="#fff"/><rect x="2" y="15" width="2" height="2" fill="#8c8c8c"/><rect x="0" y="18" width="2" height="2" fill="#fff"/><rect x="2" y="21" width="2" height="2" fill="#8c8c8c"/><rect x="0" y="24" width="2" height="2" fill="#fff"/><rect x="2" y="27" width="2" height="2" fill="#8c8c8c"/><rect x="0" y="30" width="2" height="2" fill="#fff"/><rect x="2" y="33" width="2" height="2" fill="#8c8c8c"/><rect x="0" y="36" width="2" height="2" fill="#fff"/><rect x="2" y="39" width="2" height="2" fill="#8c8c8c"/><rect x="0" y="42" width="2" height="2" fill="#fff"/><rect x="2" y="45" width="2" height="2" fill="#8c8c8c"/><rect x="0" y="48" width="2" height="2" fill="#fff"/><rect x="2" y="51" width="2" height="2" fill="#8c8c8c"/><rect x="0" y="54" width="2" height="2" fill="#fff"/><rect x="2" y="57" width="2" height="2" fill="#8c8c8c"/><rect x="0" y="60" width="2" height="2" fill="#fff"/><rect x="2" y="63" width="2" height="2" fill="#8c8c8c"/><rect x="0" y="66" width="2" height="2" fill="#fff"/><rect x="2" y="69" width="2" height="2" fill="#8c8c8c"/><rect x="0" y="72" width="2" height="2" fill="#fff"/><rect x="2" y="75" width="2" height="2" fill="#8c8c8c"/><rect x="0" y="78" width="2" height="2" fill="#fff"/><rect x="2" y="81" width="2" height="2" fill="#8c8c8c"/><rect x="0" y="84" width="2" height="2" fill="#fff"/><rect x="2" y="87" width="2" height="2" fill="#8c8c8c"/><rect x="0" y="90" width="2" height="2" fill="#fff"/><rect x="2" y="93" width="2" height="2" fill="#8c8c8c"/><rect x="0" y="96" width="2" height="2" fill="#fff"/><rect x="2" y="99" width="2" height="2" fill="#8c8c8c"/><rect x="0" y="102" width="2" height="2" fill="#fff"/><rect x="2" y="105" width="2" height="2" fill="#8c8c8c"/><rect x="0" y="108" width="2" height="2" fill="#fff"/><rect x="2" y="111" width="2" height="2" fill="#8c8c8c"/><rect x="0" y="114" width="2" height="2" fill="#fff"/><rect x="2" y="117" width="2" height="2" fill="#8c8c8c"/><rect x="0" y="120" width="2" height="2" fill="#fff"/><rect x="2" y="123" width="2" height="2" fill="#8c8c8c"/><rect x="0" y="126" width="2" height="2" fill="#fff"/><rect x="2" y="129" width="2" height="2" fill="#8c8c8c"/><rect x="0" y="132" width="2" height="2" fill="#fff"/><rect x="2" y="135" width="2" height="2" fill="#8c8c8c"/><rect x="0" y="138" width="2" height="2" fill="#fff"/><rect x="2" y="141" width="2" height="2" fill="#8c8c8c"/><rect x="0" y="144" width="2" height="2" fill="#fff"/><rect x="2" y="147" width="2" height="2" fill="#8c8c8c"/><rect x="0" y="150" width="2" height="2" fill="#fff"/><rect x="2" y="153" width="2" height="2" fill="#8c8c8c"/><rect x="0" y="156" width="2" height="2" fill="#fff"/><rect x="2" y="159" width="2" height="2" fill="#8c8c8c"/><rect x="0" y="162" width="2" height="2" fill="#fff"/><rect x="2" y="165" width="2" height="2" fill="#8c8c8c"/><rect x="0" y="168" width="2" height="2" fill="#fff"/><rect x="2" y="171" width="2" height="2" fill="#8c8c8c"/><rect x="0" y="174" width="2" height="2" fill="#fff"/><rect x="2" y="177" width="2" height="2" fill="#8c8c8c"/></svg>
<svg style="position:absolute;left:516px;top:98px" width="128" height="42" viewBox="0 0 128 42" shape-rendering="crispEdges"><rect x="0" y="0" width="128" height="42" fill="#e5e5e5"/><rect x="4" y="0" width="121" height="2" fill="#fff"/><rect x="0" y="4" width="2" height="38" fill="#fff"/><path d="M0 4L4 0L4 2L2 4Z" fill="#fff" shape-rendering="geometricPrecision"/><rect x="126" y="3" width="2" height="39" fill="#888888"/></svg>
<div class="t" style="left:529px;top:106px;font-size:24px;color:#000;letter-spacing:0.7px;">Viewer 1</div>
<div style="left:646px;top:138px;width:1398px;height:2px;background:#ffffff;"></div>
<div style="left:516px;top:140px;width:2px;height:1190px;background:#ffffff;"></div>
<div style="left:2042px;top:139px;width:2px;height:1191px;background:#888888;"></div>
<div style="left:520px;top:142px;width:68px;height:2px;background:#ffffff;"></div>
<div style="left:520px;top:142px;width:2px;height:42px;background:#ffffff;"></div>
<div style="left:520px;top:182px;width:68px;height:2px;background:#888888;"></div>
<div style="left:586px;top:142px;width:2px;height:42px;background:#888888;"></div>
<div class="t" style="left:528px;top:150px;font-size:24px;color:#000;letter-spacing:0.7px;">Hide</div>
<div style="left:588px;top:142px;width:1352px;height:2px;background:#ffffff;"></div>
<div style="left:588px;top:142px;width:2px;height:42px;background:#ffffff;"></div>
<div style="left:588px;top:182px;width:1352px;height:2px;background:#888888;"></div>
<div style="left:1938px;top:142px;width:2px;height:42px;background:#888888;"></div>
<div class="t" style="left:1214px;top:150px;font-size:24px;color:#000;letter-spacing:0.7px;">Viewer 1</div>
<div style="left:1940px;top:142px;width:100px;height:2px;background:#ffffff;"></div>
<div style="left:1940px;top:142px;width:2px;height:42px;background:#ffffff;"></div>
<div style="left:1940px;top:182px;width:100px;height:2px;background:#888888;"></div>
<div style="left:2038px;top:142px;width:2px;height:42px;background:#888888;"></div>
<div class="t" style="left:1948px;top:150px;font-size:24px;color:#000;letter-spacing:0.7px;">Actions</div>
<div style="left:520px;top:186px;width:1520px;height:2px;background:#ffffff;"></div>
<div style="left:520px;top:186px;width:2px;height:8px;background:#ffffff;"></div>
<div style="left:522px;top:188px;width:1516px;height:4px;background:#82a0c0;"></div>
<div style="left:520px;top:192px;width:1520px;height:2px;background:#888888;"></div>
<div style="left:2038px;top:186px;width:2px;height:8px;background:#888888;"></div>
<div style="left:520px;top:194px;width:1520px;height:2px;background:#ffffff;"></div>
<div style="left:520px;top:196px;width:1520px;height:1130px;background:#000;"></div>
<svg style="position:absolute;left:520px;top:196px" width="1520" height="1130" viewBox="632 260 1520 1130"><path d="M1034 475 1035 473 1081 472 1092 474 1093 476 1044 477ZM1030 389 1040 388 1090 388 1089 390 1078 391 1032 391ZM1038 568 1039 566 1084 564 1095 568 1096 570 1047 572ZM1034 483 1082 483 1093 484 1092 486 1045 487 1036 486ZM1042 658 1043 656 1088 653 1098 660 1100 662 1051 664ZM1038 575 1086 574 1097 578 1096 580 1049 582 1039 578ZM1045 746 1046 743 1091 741 1102 749 1103 751 1055 754ZM1042 665 1089 663 1100 669 1099 672 1053 674 1043 667ZM1049 831 1050 829 1094 826 1105 836 1106 838 1058 842ZM1046 753 1092 750 1103 758 1102 761 1057 764 1047 755ZM1053 915 1054 913 1097 909 1108 922 1109 924 1062 928ZM1049 838 1096 835 1106 846 1105 848 1060 852 1051 840ZM1056 997 1057 995 1100 990 1111 1005 1112 1007 1066 1012ZM1053 922 1099 918 1109 931 1108 933 1064 937 1054 924ZM1060 1077 1061 1075 1103 1070 1104 1071 1115 1088 1069 1094ZM1056 1004 1102 999 1112 1014 1111 1016 1067 1021 1066 1019ZM1063 1155 1064 1153 1106 1147 1108 1149 1118 1167 1073 1173ZM1060 1083 1105 1078 1115 1095 1114 1097 1071 1102 1070 1100ZM1066 1231 1068 1229 1109 1223 1110 1225 1121 1245 1076 1251ZM1063 1161 1108 1155 1118 1174 1117 1176 1074 1182 1073 1180ZM1114 520 1115 518 1159 517 1172 519 1173 521 1126 523ZM1111 436 1158 435 1171 436 1170 438 1124 438 1113 438ZM1117 610 1118 608 1162 606 1175 611 1176 613 1129 615ZM1114 528 1161 526 1174 529 1172 532 1127 533 1116 530ZM1120 698 1121 696 1164 693 1177 700 1178 702 1132 705ZM1117 618 1163 616 1176 620 1175 623 1130 625 1119 620ZM1123 783 1124 781 1167 778 1179 787 1181 789 1134 793ZM1120 705 1166 702 1178 710 1177 712 1133 715 1122 707ZM1126 867 1127 865 1169 861 1182 872 1183 874 1137 878ZM1123 790 1168 787 1181 797 1180 799 1136 802 1125 792ZM1129 949 1130 947 1172 942 1184 956 1185 958 1140 962ZM1126 874 1171 870 1183 882 1182 884 1139 888 1127 876ZM1131 1029 1132 1026 1174 1022 1186 1037 1188 1039 1143 1044ZM1129 956 1173 951 1186 964 1184 967 1142 971 1130 958ZM1134 1107 1135 1105 1176 1099 1189 1116 1190 1118 1146 1124ZM1132 1035 1175 1030 1188 1045 1187 1048 1144 1053 1143 1051 1133 1037ZM1137 1183 1138 1181 1178 1175 1180 1177 1192 1195 1148 1202ZM1134 1113 1178 1108 1190 1125 1189 1127 1147 1132 1146 1131ZM1139 1258 1140 1256 1181 1249 1182 1251 1194 1271 1151 1278ZM1137 1189 1180 1183 1192 1202 1191 1204 1150 1210 1148 1208ZM1189 473 1190 471 1233 470 1247 471 1249 474 1202 474ZM1187 389 1200 388 1247 388 1246 390 1231 391 1188 391ZM1191 563 1192 561 1235 559 1249 563 1250 565 1204 566ZM1189 481 1234 480 1249 481 1248 484 1204 484 1190 483ZM1193 650 1194 648 1236 646 1251 652 1252 654 1207 656ZM1191 570 1236 569 1250 573 1249 575 1206 576 1192 572ZM1195 736 1197 734 1238 731 1252 739 1254 741 1209 744ZM1194 658 1238 656 1252 662 1251 664 1208 666 1195 660ZM1198 820 1199 818 1240 814 1254 824 1255 826 1211 830ZM1196 743 1240 740 1254 748 1253 751 1210 754 1197 745ZM1200 901 1201 899 1242 895 1256 907 1257 909 1213 913ZM1198 827 1241 823 1255 833 1254 835 1212 839 1199 829ZM1202 981 1203 979 1243 975 1257 988 1258 990 1215 995ZM1200 908 1243 904 1257 916 1256 918 1214 922 1201 910ZM1204 1059 1205 1057 1245 1052 1259 1068 1260 1070 1217 1075ZM1202 988 1244 983 1258 997 1257 999 1216 1004 1203 990ZM1206 1135 1207 1133 1246 1128 1260 1145 1261 1147 1219 1153ZM1204 1066 1246 1060 1260 1076 1259 1078 1218 1084 1205 1067ZM1208 1210 1209 1208 1248 1202 1263 1223 1220 1229ZM1206 1142 1248 1136 1262 1154 1260 1156 1220 1161 1207 1144ZM1263 516 1264 514 1306 513 1322 516 1323 518 1278 519ZM1262 434 1306 434 1322 434 1321 437 1278 437 1263 437ZM1265 604 1266 602 1307 600 1323 605 1324 607 1280 609ZM1264 524 1307 523 1323 525 1322 528 1280 529 1265 526ZM1266 689 1267 687 1308 685 1324 692 1325 694 1281 696ZM1265 611 1308 610 1324 614 1323 616 1281 618 1266 613ZM1268 773 1269 771 1309 768 1325 777 1326 779 1282 782ZM1266 697 1309 694 1325 701 1324 703 1283 706 1268 699ZM1269 854 1270 852 1310 849 1326 860 1327 862 1284 866ZM1268 780 1310 777 1326 786 1325 788 1284 791 1269 782ZM1270 934 1272 932 1311 928 1326 941 1328 943 1285 947ZM1269 861 1311 858 1327 868 1326 871 1285 874 1270 863ZM1272 1012 1273 1010 1312 1006 1327 1020 1328 1022 1286 1027ZM1271 941 1312 937 1328 949 1327 951 1286 956 1272 943ZM1273 1089 1274 1087 1313 1082 1328 1098 1329 1099 1288 1105ZM1272 1019 1313 1014 1329 1028 1327 1030 1288 1035 1273 1021ZM1275 1163 1276 1161 1314 1156 1329 1173 1330 1175 1289 1181ZM1273 1095 1314 1090 1329 1106 1328 1108 1289 1113 1274 1097ZM1276 1236 1277 1234 1315 1228 1330 1248 1331 1249 1290 1256ZM1275 1169 1315 1164 1330 1181 1329 1183 1290 1189 1276 1171ZM1334 471 1335 469 1375 468 1393 469 1394 471 1351 472ZM1333 389 1350 388 1394 388 1393 390 1375 391 1334 391ZM1335 558 1336 556 1376 555 1393 558 1395 560 1352 562ZM1334 478 1377 478 1394 479 1393 481 1352 482 1335 480ZM1336 644 1337 642 1376 640 1394 645 1395 647 1352 649ZM1335 566 1377 564 1394 568 1393 570 1353 571 1336 568ZM1336 727 1338 725 1377 722 1394 730 1395 732 1353 735ZM1336 651 1377 649 1395 654 1394 656 1353 658 1337 653ZM1337 808 1338 806 1377 803 1394 813 1395 815 1353 818ZM1336 734 1378 731 1395 739 1394 741 1354 744 1338 736ZM1338 888 1339 886 1377 882 1394 894 1396 896 1354 900ZM1337 815 1378 812 1395 822 1394 824 1355 827 1338 817ZM1339 966 1340 964 1378 960 1394 973 1396 975 1355 980ZM1338 895 1378 891 1395 902 1394 904 1355 908 1339 897ZM1339 1042 1340 1040 1378 1036 1395 1050 1396 1052 1355 1057ZM1339 973 1379 968 1396 982 1395 984 1356 988 1340 974ZM1340 1117 1341 1115 1378 1110 1395 1126 1396 1128 1356 1134ZM1340 1049 1379 1044 1396 1059 1395 1061 1356 1066 1340 1050ZM1341 1190 1342 1188 1379 1182 1395 1200 1396 1202 1356 1208ZM1340 1123 1380 1118 1396 1134 1395 1136 1357 1142 1341 1125ZM1403 513 1404 511 1443 510 1462 512 1463 514 1422 515ZM1403 433 1445 433 1464 433 1463 435 1423 436 1404 436ZM1404 598 1405 596 1443 595 1462 599 1463 601 1422 603ZM1403 520 1444 519 1463 522 1462 524 1423 525 1404 522ZM1404 682 1405 680 1443 677 1462 684 1463 686 1422 688ZM1404 606 1444 604 1463 608 1462 610 1423 612 1405 608ZM1404 763 1405 761 1443 758 1461 767 1462 768 1422 772ZM1404 689 1444 686 1463 693 1462 695 1423 697 1405 691ZM1404 843 1405 841 1442 837 1461 848 1462 849 1422 853ZM1404 770 1444 767 1462 776 1461 778 1422 780 1405 772ZM1404 921 1405 919 1442 915 1460 927 1461 928 1421 933ZM1404 849 1443 846 1462 856 1461 858 1423 862 1405 851ZM1404 997 1405 995 1442 990 1460 1004 1461 1006 1421 1011ZM1404 927 1443 923 1461 935 1460 937 1422 941 1405 929ZM1404 1071 1405 1069 1442 1065 1460 1080 1461 1082 1421 1087ZM1404 1003 1443 998 1461 1012 1460 1014 1422 1019 1405 1005ZM1404 1144 1406 1142 1442 1137 1459 1154 1460 1156 1421 1161ZM1404 1078 1443 1072 1461 1088 1460 1090 1422 1095 1405 1079ZM1405 1216 1406 1214 1441 1208 1459 1226 1460 1228 1421 1234ZM1404 1150 1443 1145 1460 1162 1459 1164 1422 1169 1405 1152ZM1470 469 1472 467 1509 466 1530 467 1531 469 1490 470ZM1471 389 1491 388 1532 388 1531 390 1510 391 1472 391ZM1470 554 1471 552 1508 550 1529 554 1530 556 1490 557ZM1470 476 1510 475 1531 476 1530 479 1491 479 1471 478ZM1470 637 1471 635 1508 633 1528 638 1529 640 1489 642ZM1470 561 1510 560 1530 563 1529 565 1490 566 1471 563ZM1469 718 1470 716 1507 714 1527 721 1528 723 1488 726ZM1469 644 1509 642 1529 647 1528 649 1490 652 1470 646ZM1469 798 1470 796 1506 793 1526 802 1527 804 1488 807ZM1469 725 1508 723 1528 730 1527 732 1489 734 1470 727ZM1468 876 1469 874 1505 870 1525 881 1526 883 1487 887ZM1468 805 1507 801 1527 811 1526 813 1488 816 1470 806ZM1468 952 1469 950 1505 946 1524 958 1525 960 1486 965ZM1468 882 1506 878 1526 890 1525 891 1488 895 1469 884ZM1467 1026 1468 1024 1504 1020 1523 1034 1524 1036 1486 1041ZM1468 958 1506 954 1525 967 1524 969 1487 973 1469 960ZM1467 1099 1468 1098 1503 1092 1522 1108 1523 1110 1485 1115ZM1467 1033 1505 1028 1524 1042 1523 1044 1487 1049 1468 1034ZM1466 1171 1467 1169 1502 1164 1521 1181 1522 1182 1484 1188ZM1467 1105 1504 1100 1523 1116 1522 1118 1486 1123 1468 1107ZM1535 510 1536 508 1573 507 1594 509 1595 511 1556 512ZM1536 432 1575 432 1597 432 1596 434 1558 434 1537 434ZM1534 593 1535 591 1571 590 1593 594 1594 596 1555 597ZM1535 517 1574 516 1595 518 1594 520 1557 521 1536 519ZM1533 674 1534 672 1570 670 1591 676 1592 678 1553 680ZM1534 600 1572 598 1594 603 1592 605 1556 606 1535 602ZM1532 754 1533 752 1568 749 1590 757 1590 759 1552 762ZM1533 681 1571 679 1592 685 1591 687 1554 689 1534 683ZM1531 832 1532 830 1567 826 1588 836 1589 838 1551 841ZM1532 760 1569 758 1590 766 1589 768 1553 770 1533 762ZM1530 908 1531 906 1566 902 1586 913 1587 915 1550 919ZM1531 838 1568 835 1589 844 1588 846 1552 850 1532 840ZM1529 982 1530 980 1565 976 1585 989 1586 991 1549 995ZM1530 914 1567 910 1587 922 1586 924 1551 927 1531 916ZM1528 1055 1529 1053 1563 1048 1584 1063 1584 1065 1547 1070ZM1529 988 1566 984 1586 997 1585 999 1550 1003 1530 990ZM1527 1126 1528 1124 1562 1120 1582 1135 1583 1137 1546 1143ZM1528 1061 1564 1056 1584 1071 1583 1073 1548 1078 1529 1063ZM1526 1196 1527 1194 1561 1189 1581 1206 1582 1208 1545 1214ZM1527 1132 1563 1127 1583 1143 1582 1145 1547 1150 1528 1134ZM1599 467 1600 465 1635 464 1658 465 1659 467 1621 468ZM1600 389 1623 388 1661 388 1660 390 1637 391 1601 391ZM1597 550 1598 548 1633 546 1656 550 1657 551 1619 553ZM1598 474 1636 473 1659 474 1658 476 1622 477 1600 476ZM1595 631 1597 629 1632 627 1654 632 1655 634 1617 636ZM1597 557 1634 555 1657 558 1656 561 1620 562 1598 559ZM1594 710 1595 708 1630 706 1652 713 1653 714 1616 717ZM1595 638 1632 636 1655 641 1654 643 1618 645 1596 640ZM1592 788 1593 786 1628 783 1650 792 1651 793 1614 796ZM1594 717 1630 714 1653 721 1652 723 1616 726 1595 719ZM1591 864 1592 862 1626 859 1648 869 1649 871 1612 874ZM1592 794 1629 791 1650 800 1650 802 1614 805 1593 796ZM1589 938 1590 936 1624 933 1646 944 1647 946 1610 950ZM1591 870 1627 867 1648 877 1648 879 1613 883 1592 872ZM1588 1011 1589 1009 1622 1005 1644 1018 1645 1020 1609 1025ZM1589 945 1625 940 1646 952 1646 954 1611 958 1590 946ZM1587 1083 1588 1081 1621 1076 1642 1091 1643 1092 1607 1098ZM1588 1017 1623 1013 1644 1026 1644 1028 1609 1033 1589 1019ZM1585 1152 1586 1151 1619 1146 1640 1162 1641 1163 1605 1169ZM1586 1088 1622 1084 1643 1098 1642 1100 1608 1105 1587 1090ZM1659 507 1660 505 1694 504 1718 506 1719 508 1682 509ZM1661 431 1698 431 1722 431 1721 433 1685 433 1662 433ZM1657 588 1658 586 1692 584 1716 588 1716 590 1680 592ZM1659 514 1695 513 1719 515 1718 517 1683 518 1660 516ZM1655 667 1656 665 1690 663 1713 669 1714 671 1678 673ZM1657 595 1693 593 1716 597 1715 599 1680 601 1658 597ZM1653 745 1654 743 1687 740 1710 748 1711 750 1675 752ZM1655 674 1690 672 1714 678 1713 680 1678 682 1656 676ZM1651 821 1652 819 1685 816 1708 825 1709 827 1673 830ZM1652 751 1688 749 1711 756 1710 758 1676 761 1653 753ZM1649 895 1650 893 1683 890 1705 900 1706 902 1671 906ZM1650 827 1686 824 1708 833 1708 835 1674 838 1651 829ZM1647 968 1648 966 1681 962 1703 974 1704 976 1668 980ZM1648 901 1684 898 1706 908 1705 910 1672 914 1649 903ZM1645 1039 1646 1037 1678 1033 1701 1047 1701 1048 1666 1053ZM1647 974 1681 970 1704 982 1703 984 1669 988 1648 976ZM1643 1109 1644 1107 1676 1103 1698 1118 1699 1119 1664 1125ZM1645 1045 1679 1041 1701 1054 1700 1056 1667 1061 1646 1047ZM1641 1178 1642 1176 1674 1171 1696 1187 1697 1189 1662 1194ZM1643 1115 1677 1110 1699 1125 1698 1127 1665 1132 1644 1117Z" fill="#0000d2"/><path d="M1081 472 1102 432 1105 432 1116 432 1093 476 1082 475ZM1007 433 1010 433 1019 433 1045 474 1044 477 1034 475ZM1007 433 1030 389 1040 388 1041 390 1019 433 1016 433ZM1078 391 1079 389 1090 388 1116 432 1113 432 1102 432ZM1084 564 1105 524 1108 524 1119 527 1096 570 1086 566ZM1012 526 1014 526 1023 529 1049 569 1047 572 1038 568ZM1012 526 1034 483 1044 485 1045 487 1023 529 1020 529ZM1081 485 1082 483 1093 484 1119 527 1117 527 1105 524ZM1088 653 1108 614 1111 614 1122 619 1100 662 1089 655ZM1016 618 1018 618 1027 623 1052 662 1051 664 1042 658ZM1016 618 1038 575 1048 580 1049 582 1027 623 1025 623ZM1085 576 1086 574 1097 578 1122 619 1120 619 1108 614ZM1091 741 1111 702 1114 702 1125 709 1103 751 1092 743ZM1020 707 1022 707 1031 714 1056 752 1055 754 1045 746ZM1020 707 1042 665 1051 672 1053 674 1031 714 1029 715ZM1088 665 1089 663 1100 669 1125 709 1123 709 1111 702ZM1094 826 1114 788 1117 787 1128 797 1106 838 1095 828ZM1024 794 1026 794 1035 804 1060 840 1058 842 1049 831ZM1024 794 1046 753 1055 762 1057 764 1035 804 1033 804ZM1091 752 1092 750 1103 758 1128 797 1126 797 1114 788ZM1097 909 1117 871 1120 871 1131 883 1109 924 1098 911ZM1028 879 1030 879 1039 891 1063 926 1062 928 1053 915ZM1028 879 1049 838 1059 850 1060 852 1039 891 1037 891ZM1094 837 1096 835 1106 846 1131 883 1128 883 1117 871ZM1100 990 1120 953 1123 953 1134 966 1112 1007 1102 992ZM1031 962 1034 962 1057 995 1067 1010 1066 1012 1040 976ZM1031 962 1053 922 1062 935 1064 937 1043 976 1040 976ZM1098 920 1099 918 1109 931 1134 966 1131 967 1120 953ZM1103 1070 1123 1033 1125 1033 1137 1048 1115 1088 1114 1086ZM1035 1043 1038 1043 1061 1075 1070 1091 1069 1094 1044 1059ZM1035 1043 1056 1004 1058 1006 1067 1021 1047 1059 1044 1059ZM1101 1001 1102 999 1112 1014 1137 1048 1134 1048 1123 1033ZM1106 1147 1126 1111 1128 1111 1139 1128 1118 1167 1117 1165ZM1039 1122 1041 1122 1064 1153 1074 1171 1073 1173 1048 1140ZM1039 1122 1060 1083 1061 1085 1071 1102 1050 1140 1048 1140ZM1104 1080 1105 1078 1128 1111 1139 1128 1137 1128 1114 1097ZM1109 1223 1129 1187 1131 1187 1142 1206 1121 1245 1120 1243ZM1042 1200 1045 1199 1068 1229 1077 1249 1076 1251 1052 1219ZM1042 1200 1063 1161 1065 1163 1074 1182 1054 1219 1052 1219ZM1107 1157 1108 1155 1131 1187 1142 1206 1140 1206 1117 1176ZM1159 517 1180 477 1183 477 1196 478 1173 521 1161 519ZM1089 478 1092 478 1103 480 1127 520 1126 523 1114 520ZM1089 478 1111 436 1123 436 1124 438 1103 480 1100 480ZM1157 438 1158 435 1171 436 1196 478 1193 478 1180 477ZM1162 606 1182 567 1185 567 1198 571 1176 613 1163 608ZM1092 570 1095 570 1106 574 1130 613 1129 615 1117 610ZM1092 570 1114 528 1126 530 1127 533 1106 574 1103 574ZM1160 529 1161 526 1174 529 1198 571 1196 571 1182 567ZM1164 693 1185 655 1187 654 1200 660 1178 702 1166 695ZM1096 659 1098 659 1109 665 1133 703 1132 705 1120 698ZM1096 659 1117 618 1129 622 1130 625 1109 665 1106 665ZM1162 618 1163 616 1176 620 1200 660 1198 661 1185 655ZM1167 778 1187 740 1189 740 1202 748 1181 789 1168 780ZM1099 746 1101 746 1112 754 1136 791 1134 793 1123 783ZM1099 746 1120 705 1132 712 1133 715 1112 754 1110 754ZM1165 704 1166 702 1178 710 1202 748 1200 748 1187 740ZM1169 861 1189 824 1192 824 1205 834 1183 874 1170 863ZM1102 831 1104 831 1115 841 1138 876 1137 878 1126 867ZM1102 831 1123 790 1135 800 1136 802 1115 841 1113 842ZM1167 789 1168 787 1181 797 1205 834 1202 834 1189 824ZM1172 942 1191 906 1194 905 1207 918 1185 958 1173 944ZM1105 914 1107 914 1118 926 1141 960 1140 962 1129 949ZM1105 914 1126 874 1138 886 1139 888 1118 926 1116 926ZM1170 872 1171 870 1183 882 1207 918 1204 918 1191 906ZM1174 1022 1194 985 1196 985 1209 999 1188 1039 1175 1024ZM1108 995 1110 994 1121 1009 1144 1042 1143 1044 1131 1029ZM1108 995 1129 956 1140 969 1142 971 1121 1009 1119 1009ZM1172 953 1173 951 1186 964 1209 999 1206 1000 1194 985ZM1176 1099 1196 1063 1198 1063 1211 1079 1190 1118 1177 1101ZM1111 1074 1113 1074 1135 1105 1146 1122 1146 1124 1122 1090ZM1111 1074 1132 1035 1144 1053 1124 1090 1122 1090ZM1174 1032 1175 1030 1188 1045 1211 1079 1208 1080 1196 1063ZM1178 1175 1198 1140 1200 1139 1213 1157 1192 1195 1191 1194ZM1114 1151 1116 1151 1138 1181 1149 1200 1148 1202 1125 1170ZM1114 1151 1134 1113 1136 1115 1147 1132 1127 1169 1125 1170ZM1176 1110 1178 1108 1190 1125 1213 1157 1210 1157 1198 1140ZM1181 1249 1200 1214 1202 1214 1215 1233 1194 1271 1193 1270ZM1116 1227 1119 1226 1140 1256 1152 1276 1151 1278 1127 1247ZM1116 1227 1137 1189 1138 1191 1150 1210 1130 1246 1127 1247ZM1179 1185 1180 1183 1202 1214 1215 1233 1212 1234 1191 1204ZM1233 470 1253 431 1271 431 1249 474 1234 472ZM1165 431 1167 431 1180 432 1204 472 1202 474 1189 473ZM1165 431 1187 389 1200 388 1202 390 1180 432 1178 432ZM1231 391 1232 389 1247 388 1271 431 1253 431ZM1235 559 1255 520 1257 520 1272 523 1250 565 1236 561ZM1167 522 1170 522 1182 525 1206 564 1204 566 1191 563ZM1167 522 1189 481 1202 482 1204 484 1182 525 1180 525ZM1233 482 1234 480 1249 481 1272 523 1270 523 1255 520ZM1236 646 1257 608 1259 608 1274 613 1252 654 1238 648ZM1170 612 1172 611 1185 616 1208 654 1207 656 1193 650ZM1170 612 1191 570 1205 574 1206 576 1185 616 1182 616ZM1235 571 1236 569 1250 573 1274 613 1271 613 1257 608ZM1238 731 1258 694 1260 693 1275 700 1254 741 1239 733ZM1172 698 1174 698 1187 705 1210 742 1209 744 1195 736ZM1172 698 1194 658 1207 664 1208 666 1187 705 1185 706ZM1237 658 1238 656 1252 662 1275 700 1273 700 1258 694ZM1240 814 1260 777 1262 777 1276 786 1255 826 1241 816ZM1174 783 1177 783 1190 792 1212 828 1211 830 1198 820ZM1174 783 1196 743 1209 752 1210 754 1190 792 1187 793ZM1238 742 1240 740 1254 748 1276 786 1274 786 1260 777ZM1242 895 1261 859 1263 858 1278 870 1257 909 1243 897ZM1177 866 1179 866 1192 877 1214 911 1213 913 1200 901ZM1177 866 1198 827 1211 837 1212 839 1192 877 1189 877ZM1240 825 1241 823 1255 833 1278 870 1276 870 1261 859ZM1243 975 1262 938 1265 938 1279 951 1258 990 1244 976ZM1179 947 1181 947 1194 960 1216 993 1215 995 1202 981ZM1179 947 1200 908 1213 920 1214 922 1194 960 1192 960ZM1242 906 1243 904 1257 916 1279 951 1277 951 1262 938ZM1245 1052 1264 1016 1266 1016 1280 1031 1260 1070 1246 1054ZM1181 1026 1184 1026 1196 1041 1218 1073 1217 1075 1204 1059ZM1181 1026 1202 988 1215 1002 1216 1004 1196 1041 1194 1041ZM1244 985 1244 983 1258 997 1280 1031 1278 1031 1264 1016ZM1246 1128 1265 1093 1268 1092 1282 1109 1261 1147 1248 1130ZM1184 1104 1186 1103 1198 1120 1220 1151 1219 1153 1206 1135ZM1184 1104 1204 1066 1217 1082 1218 1084 1198 1120 1196 1120ZM1245 1062 1246 1060 1260 1076 1282 1109 1280 1109 1265 1093ZM1248 1202 1267 1168 1269 1167 1283 1185 1263 1223 1262 1221 1249 1204ZM1186 1179 1188 1179 1209 1208 1222 1227 1220 1229 1198 1198ZM1186 1179 1206 1142 1219 1160 1220 1161 1200 1197 1198 1198ZM1247 1138 1248 1136 1262 1154 1283 1185 1281 1186 1267 1168ZM1306 513 1326 475 1328 475 1345 476 1323 518 1307 516ZM1240 476 1243 476 1258 477 1280 517 1278 519 1263 516ZM1240 476 1262 434 1277 435 1278 437 1258 477 1255 477ZM1305 436 1306 434 1322 434 1345 476 1342 476 1326 475ZM1307 600 1327 562 1329 562 1346 566 1324 607 1308 602ZM1242 565 1244 565 1259 568 1281 606 1280 609 1265 604ZM1242 565 1264 524 1279 526 1280 529 1259 568 1257 568ZM1306 525 1307 523 1323 525 1346 566 1343 566 1327 562ZM1308 685 1328 648 1330 647 1346 653 1325 694 1309 687ZM1244 652 1246 652 1261 658 1282 694 1281 696 1266 689ZM1244 652 1265 611 1280 616 1281 618 1261 658 1258 658ZM1307 612 1308 610 1324 614 1346 653 1344 653 1328 648ZM1309 768 1328 731 1331 731 1347 739 1326 779 1310 770ZM1246 736 1248 736 1262 744 1284 780 1282 782 1268 773ZM1246 736 1266 697 1281 704 1283 706 1262 744 1260 744ZM1308 696 1309 694 1325 701 1347 739 1345 739 1328 731ZM1310 849 1329 812 1332 812 1348 822 1327 862 1311 851ZM1247 819 1249 819 1264 829 1285 863 1284 866 1269 854ZM1247 819 1268 780 1283 789 1284 791 1264 829 1262 829ZM1309 779 1310 777 1326 786 1348 822 1345 822 1329 812ZM1311 928 1330 892 1332 892 1348 904 1328 943 1312 930ZM1249 900 1251 900 1265 912 1286 945 1285 947 1270 934ZM1249 900 1269 861 1284 872 1285 874 1265 912 1263 912ZM1310 860 1311 858 1327 868 1348 904 1346 904 1330 892ZM1312 1006 1331 970 1333 970 1349 983 1328 1022 1313 1008ZM1250 979 1252 979 1267 993 1288 1025 1286 1027 1272 1012ZM1250 979 1271 941 1285 954 1286 956 1267 993 1264 993ZM1311 939 1312 937 1328 949 1349 983 1347 984 1331 970ZM1313 1082 1332 1046 1334 1046 1350 1061 1329 1099 1314 1083ZM1252 1056 1254 1056 1268 1072 1289 1103 1288 1105 1273 1089ZM1252 1056 1272 1019 1287 1034 1288 1035 1268 1072 1266 1072ZM1312 1016 1313 1014 1329 1028 1350 1061 1347 1062 1332 1046ZM1314 1156 1332 1121 1335 1121 1350 1138 1330 1175 1315 1157ZM1253 1132 1256 1132 1270 1149 1290 1179 1289 1181 1275 1163ZM1253 1132 1273 1095 1288 1111 1289 1113 1270 1149 1267 1149ZM1313 1092 1314 1090 1329 1106 1350 1138 1348 1138 1332 1121ZM1315 1228 1333 1194 1335 1194 1351 1212 1331 1249 1316 1230ZM1255 1206 1257 1206 1271 1225 1291 1254 1290 1256 1276 1236ZM1255 1206 1275 1169 1289 1188 1290 1189 1271 1225 1269 1225ZM1314 1166 1315 1164 1330 1181 1351 1212 1349 1212 1333 1194ZM1375 468 1395 430 1416 430 1394 471 1377 470ZM1312 430 1331 430 1352 470 1351 472 1334 471ZM1312 430 1333 389 1350 388 1352 390 1331 430 1328 430ZM1375 391 1376 389 1394 388 1416 430 1395 430ZM1376 555 1395 517 1398 517 1416 519 1395 560 1377 557ZM1313 519 1315 519 1332 521 1353 559 1352 562 1335 558ZM1313 519 1334 478 1351 480 1352 482 1332 521 1329 522ZM1376 480 1377 478 1394 479 1416 519 1414 519 1395 517ZM1376 640 1396 602 1398 602 1416 607 1395 647 1377 642ZM1314 606 1316 606 1332 610 1353 647 1352 649 1336 644ZM1314 606 1335 566 1352 569 1353 571 1332 610 1330 610ZM1376 566 1377 564 1394 568 1416 607 1414 607 1396 602ZM1377 722 1396 686 1398 686 1416 692 1395 732 1378 724ZM1315 690 1317 690 1333 697 1354 732 1353 735 1336 727ZM1315 690 1336 651 1352 656 1353 658 1333 697 1331 697ZM1376 651 1377 649 1395 654 1416 692 1414 692 1396 686ZM1377 803 1396 767 1398 767 1416 776 1395 815 1378 805ZM1316 773 1318 773 1334 782 1355 816 1353 818 1337 808ZM1316 773 1336 734 1353 742 1354 744 1334 782 1332 782ZM1377 733 1378 731 1395 739 1416 776 1414 776 1396 767ZM1377 882 1396 847 1398 846 1416 857 1396 896 1378 884ZM1317 854 1319 854 1335 864 1355 898 1354 900 1338 888ZM1317 854 1337 815 1354 825 1355 827 1335 864 1333 864ZM1377 814 1378 812 1395 822 1416 857 1414 857 1396 847ZM1378 960 1396 925 1399 924 1416 937 1396 975 1379 962ZM1318 933 1320 933 1336 945 1356 977 1355 980 1339 966ZM1318 933 1338 895 1354 906 1355 908 1336 945 1334 945ZM1377 893 1378 891 1395 902 1416 937 1414 937 1396 925ZM1378 1036 1397 1001 1399 1001 1416 1015 1396 1052 1379 1037ZM1319 1010 1321 1010 1336 1024 1356 1055 1355 1057 1339 1042ZM1319 1010 1339 973 1355 986 1356 988 1336 1024 1334 1024ZM1378 970 1379 968 1396 982 1416 1015 1414 1015 1397 1001ZM1378 1110 1397 1075 1399 1075 1416 1091 1396 1128 1380 1112ZM1320 1086 1322 1085 1337 1102 1357 1132 1356 1134 1340 1117ZM1320 1086 1340 1049 1355 1064 1356 1066 1337 1102 1335 1102ZM1378 1046 1379 1044 1396 1059 1416 1091 1414 1091 1397 1075ZM1379 1182 1397 1148 1399 1148 1416 1165 1396 1202 1380 1184ZM1321 1160 1323 1159 1338 1177 1357 1206 1356 1208 1341 1190ZM1321 1160 1340 1123 1356 1140 1357 1142 1338 1177 1336 1177ZM1378 1120 1380 1118 1396 1134 1416 1165 1414 1166 1397 1148ZM1443 510 1463 472 1465 472 1484 474 1463 514 1444 512ZM1382 474 1385 474 1403 475 1423 513 1422 515 1403 513ZM1382 474 1403 433 1422 434 1423 436 1403 475 1400 475ZM1444 435 1445 433 1464 433 1484 474 1482 474 1463 472ZM1443 595 1462 558 1464 558 1484 561 1463 601 1444 597ZM1383 560 1385 560 1403 564 1423 601 1422 603 1404 598ZM1383 560 1403 520 1422 523 1423 525 1403 564 1400 564ZM1443 522 1444 519 1463 522 1484 561 1482 561 1462 558ZM1443 677 1462 641 1464 641 1483 646 1463 686 1444 679ZM1383 645 1385 645 1403 650 1423 686 1422 688 1404 682ZM1383 645 1404 606 1422 610 1423 612 1403 650 1401 650ZM1443 606 1444 604 1463 608 1483 646 1481 646 1462 641ZM1443 758 1461 722 1464 722 1482 730 1462 768 1444 760ZM1383 727 1386 727 1403 735 1423 770 1422 772 1404 763ZM1383 727 1404 689 1422 695 1423 697 1403 735 1401 735ZM1443 688 1444 686 1463 693 1482 730 1480 730 1461 722ZM1442 837 1461 802 1463 802 1482 811 1462 849 1444 839ZM1384 808 1386 808 1403 818 1422 851 1422 853 1404 843ZM1384 808 1404 770 1422 778 1422 780 1403 818 1401 818ZM1443 769 1444 767 1462 776 1482 811 1480 811 1461 802ZM1442 915 1461 880 1463 880 1481 891 1461 928 1443 916ZM1384 887 1386 887 1403 898 1422 931 1421 933 1404 921ZM1384 887 1404 849 1421 860 1423 862 1403 898 1401 898ZM1442 848 1443 846 1462 856 1481 891 1479 891 1461 880ZM1442 990 1460 956 1462 956 1481 968 1461 1006 1443 992ZM1384 964 1386 964 1403 977 1422 1009 1421 1011 1404 997ZM1384 964 1404 927 1422 939 1422 941 1403 977 1401 978ZM1442 925 1443 923 1461 935 1481 968 1479 969 1460 956ZM1442 1065 1460 1030 1462 1030 1480 1045 1461 1082 1443 1066ZM1385 1040 1387 1040 1404 1054 1422 1085 1421 1087 1404 1071ZM1385 1040 1404 1003 1421 1017 1422 1019 1404 1054 1401 1055ZM1442 1000 1443 998 1461 1012 1480 1045 1478 1045 1460 1030ZM1442 1137 1460 1103 1462 1103 1480 1119 1460 1156 1443 1139ZM1385 1114 1387 1114 1404 1130 1422 1159 1421 1161 1404 1144ZM1385 1114 1404 1078 1421 1093 1422 1095 1404 1130 1402 1130ZM1442 1074 1443 1072 1461 1088 1480 1119 1478 1119 1460 1103ZM1441 1208 1459 1175 1461 1174 1479 1192 1460 1228 1442 1210ZM1385 1186 1387 1186 1404 1204 1422 1232 1421 1234 1405 1216ZM1385 1186 1404 1150 1421 1168 1422 1169 1404 1204 1402 1204ZM1442 1147 1443 1145 1460 1162 1479 1192 1477 1192 1459 1175ZM1509 466 1528 429 1531 429 1552 429 1531 469 1510 468ZM1450 429 1472 429 1491 468 1490 470 1470 469ZM1450 429 1471 389 1491 388 1492 390 1472 429 1470 429ZM1510 391 1511 389 1532 388 1552 429 1528 429ZM1508 550 1528 514 1530 514 1550 516 1530 556 1510 553ZM1450 516 1452 516 1471 518 1491 555 1490 557 1470 554ZM1450 516 1470 476 1490 477 1491 479 1471 518 1469 518ZM1509 477 1510 475 1531 476 1550 516 1548 516 1528 514ZM1508 633 1526 597 1528 597 1549 601 1529 640 1509 635ZM1450 600 1452 600 1471 604 1490 640 1489 642 1470 637ZM1450 600 1470 561 1489 564 1490 566 1471 604 1469 604ZM1508 562 1510 560 1530 563 1549 601 1547 601 1526 597ZM1507 714 1526 678 1528 678 1548 684 1528 723 1508 716ZM1449 682 1452 682 1470 689 1489 724 1488 726 1469 718ZM1449 682 1469 644 1489 650 1490 652 1470 689 1468 689ZM1508 644 1509 642 1529 647 1548 684 1546 684 1526 678ZM1506 793 1524 758 1527 757 1547 766 1527 804 1507 795ZM1449 763 1451 763 1470 771 1489 805 1488 807 1469 798ZM1449 763 1469 725 1488 733 1489 734 1470 771 1468 772ZM1507 725 1508 723 1528 730 1547 766 1545 766 1524 758ZM1505 870 1524 835 1526 835 1546 845 1526 883 1506 872ZM1449 842 1451 842 1470 852 1488 885 1487 887 1468 876ZM1449 842 1468 805 1487 814 1488 816 1470 852 1467 852ZM1506 803 1507 801 1527 811 1546 845 1544 845 1524 835ZM1505 946 1523 912 1525 911 1544 923 1525 960 1506 948ZM1449 919 1451 919 1469 931 1487 962 1486 965 1468 952ZM1449 919 1468 882 1487 893 1488 895 1469 931 1467 931ZM1505 880 1506 878 1526 890 1544 923 1542 923 1523 912ZM1504 1020 1522 986 1524 986 1543 999 1524 1036 1505 1022ZM1448 995 1450 994 1468 1008 1487 1039 1486 1041 1467 1026ZM1448 995 1468 958 1486 971 1487 973 1468 1008 1466 1008ZM1504 956 1506 954 1525 967 1543 999 1541 999 1522 986ZM1503 1092 1521 1059 1523 1059 1542 1074 1523 1110 1504 1094ZM1448 1069 1450 1068 1468 1084 1486 1113 1485 1115 1467 1099ZM1448 1069 1467 1033 1486 1047 1487 1049 1468 1084 1466 1084ZM1504 1030 1505 1028 1524 1042 1542 1074 1540 1074 1521 1059ZM1502 1164 1520 1130 1522 1130 1541 1146 1522 1182 1503 1165ZM1448 1141 1450 1141 1468 1158 1486 1186 1484 1188 1466 1171ZM1448 1141 1467 1105 1485 1121 1486 1123 1468 1158 1466 1158ZM1503 1102 1504 1100 1523 1116 1541 1146 1539 1147 1520 1130ZM1573 507 1591 470 1593 470 1616 471 1595 511 1574 509ZM1516 472 1518 472 1539 473 1557 510 1556 512 1535 510ZM1516 472 1536 432 1557 432 1558 434 1539 473 1536 473ZM1574 434 1575 432 1597 432 1616 471 1614 472 1591 470ZM1571 590 1590 553 1592 553 1614 556 1594 596 1572 591ZM1515 556 1517 556 1538 559 1556 595 1555 597 1534 593ZM1515 556 1535 517 1556 519 1557 521 1538 559 1535 559ZM1572 518 1574 516 1595 518 1614 556 1612 556 1590 553ZM1570 670 1588 634 1590 634 1612 640 1592 678 1571 672ZM1514 638 1516 638 1536 643 1554 678 1553 680 1533 674ZM1514 638 1534 600 1554 604 1556 606 1536 643 1534 644ZM1571 600 1572 598 1594 603 1612 640 1610 640 1588 634ZM1568 749 1587 714 1589 714 1610 721 1590 759 1570 751ZM1513 719 1515 719 1535 726 1553 760 1552 762 1532 754ZM1513 719 1533 681 1553 687 1554 689 1535 726 1533 726ZM1570 681 1571 679 1592 685 1610 721 1608 721 1587 714ZM1567 826 1585 792 1587 792 1608 800 1589 838 1568 828ZM1512 798 1514 798 1534 806 1552 839 1551 841 1531 832ZM1512 798 1532 760 1552 768 1553 770 1534 806 1532 807ZM1568 760 1569 758 1590 766 1608 800 1606 800 1585 792ZM1566 902 1584 868 1586 868 1607 878 1587 915 1567 904ZM1512 875 1514 875 1533 885 1551 917 1550 919 1530 908ZM1512 875 1531 838 1551 848 1552 850 1533 885 1531 886ZM1567 837 1568 835 1589 844 1607 878 1605 878 1584 868ZM1565 976 1582 942 1584 942 1605 954 1586 991 1566 978ZM1511 950 1513 950 1532 962 1550 993 1549 995 1529 982ZM1511 950 1530 914 1550 926 1551 927 1532 962 1530 963ZM1566 912 1567 910 1587 922 1605 954 1603 954 1582 942ZM1563 1048 1581 1015 1583 1015 1604 1029 1584 1065 1564 1050ZM1510 1024 1512 1024 1531 1038 1548 1068 1547 1070 1528 1055ZM1510 1024 1529 988 1548 1002 1550 1003 1531 1038 1529 1038ZM1564 986 1566 984 1586 997 1604 1029 1602 1029 1581 1015ZM1562 1120 1580 1086 1582 1086 1602 1101 1583 1137 1563 1121ZM1509 1096 1511 1096 1530 1112 1547 1141 1546 1143 1527 1126ZM1509 1096 1528 1061 1547 1076 1548 1078 1530 1112 1528 1112ZM1563 1058 1564 1056 1584 1071 1602 1101 1600 1102 1580 1086ZM1561 1189 1578 1156 1580 1156 1600 1173 1582 1208 1562 1190ZM1508 1167 1510 1167 1529 1184 1546 1212 1545 1214 1526 1196ZM1508 1167 1527 1132 1546 1149 1547 1150 1529 1184 1527 1184ZM1562 1129 1563 1127 1583 1143 1600 1173 1598 1173 1578 1156ZM1635 464 1654 428 1679 428 1659 467 1636 466ZM1580 428 1602 428 1604 428 1622 466 1621 468 1599 467ZM1580 428 1600 389 1623 388 1624 390 1604 428 1582 428ZM1637 391 1638 389 1661 388 1679 428 1677 428 1654 428ZM1633 546 1652 511 1654 510 1677 513 1657 551 1634 548ZM1579 512 1581 512 1603 514 1620 551 1619 553 1597 550ZM1579 512 1598 474 1621 475 1622 477 1603 514 1601 515ZM1635 475 1636 473 1659 474 1677 513 1675 513 1652 511ZM1632 627 1650 592 1652 592 1674 596 1655 634 1632 629ZM1577 595 1579 595 1601 599 1618 634 1617 636 1595 631ZM1577 595 1597 557 1619 560 1620 562 1601 599 1599 599ZM1633 557 1634 555 1657 558 1674 596 1673 596 1650 592ZM1630 706 1648 671 1650 671 1672 677 1653 714 1630 708ZM1576 675 1578 675 1599 681 1616 715 1616 717 1594 710ZM1576 675 1595 638 1617 643 1618 645 1599 681 1597 681ZM1631 638 1632 636 1655 641 1672 677 1670 677 1648 671ZM1628 783 1646 749 1648 748 1670 756 1651 793 1629 785ZM1575 754 1577 754 1598 762 1615 794 1614 796 1592 788ZM1575 754 1594 717 1615 724 1616 726 1598 762 1596 762ZM1629 716 1630 714 1653 721 1670 756 1668 756 1646 749ZM1626 859 1644 825 1646 824 1668 834 1649 871 1627 860ZM1573 831 1575 831 1596 840 1613 872 1612 874 1591 864ZM1573 831 1592 794 1614 803 1614 805 1596 840 1594 841ZM1628 793 1629 791 1650 800 1668 834 1666 834 1644 825ZM1624 933 1642 899 1644 899 1666 910 1647 946 1625 934ZM1572 906 1574 906 1594 918 1611 948 1610 950 1589 938ZM1572 906 1591 870 1612 881 1613 883 1594 918 1592 918ZM1626 869 1627 867 1648 877 1666 910 1664 910 1642 899ZM1622 1005 1640 972 1642 972 1664 984 1645 1020 1623 1007ZM1571 980 1572 980 1593 993 1610 1023 1609 1025 1588 1011ZM1571 980 1589 945 1610 957 1611 958 1593 993 1591 993ZM1624 942 1625 940 1646 952 1664 984 1662 984 1640 972ZM1621 1076 1638 1043 1640 1043 1661 1057 1643 1092 1622 1078ZM1569 1052 1571 1052 1591 1067 1608 1096 1607 1098 1587 1083ZM1569 1052 1588 1017 1608 1031 1609 1033 1591 1067 1590 1067ZM1622 1015 1623 1013 1644 1026 1661 1057 1660 1057 1638 1043ZM1619 1146 1636 1113 1638 1113 1659 1128 1641 1163 1620 1147ZM1568 1123 1570 1123 1590 1139 1606 1167 1605 1169 1585 1152ZM1568 1123 1586 1088 1607 1104 1608 1105 1590 1139 1588 1139ZM1621 1085 1622 1084 1643 1098 1659 1128 1658 1129 1636 1113ZM1694 504 1712 468 1714 468 1739 469 1719 508 1695 506ZM1641 470 1643 470 1666 470 1683 507 1682 509 1659 507ZM1641 470 1661 431 1684 431 1685 433 1666 470 1664 471ZM1696 433 1698 431 1722 431 1739 469 1737 469 1712 468ZM1692 584 1710 549 1712 549 1736 552 1716 590 1693 586ZM1640 552 1641 552 1664 555 1681 590 1680 592 1657 588ZM1640 552 1659 514 1682 516 1683 518 1664 555 1662 555ZM1694 515 1695 513 1719 515 1736 552 1734 552 1710 549ZM1690 663 1707 629 1709 628 1733 633 1714 671 1691 665ZM1638 632 1639 632 1662 637 1678 671 1678 673 1655 667ZM1638 632 1657 595 1680 599 1680 601 1662 637 1660 637ZM1692 595 1693 593 1716 597 1733 633 1731 633 1707 629ZM1687 740 1705 706 1707 706 1730 713 1711 750 1688 742ZM1636 711 1637 711 1660 717 1676 750 1675 752 1653 745ZM1636 711 1655 674 1677 680 1678 682 1660 717 1658 718ZM1689 674 1690 672 1714 678 1730 713 1728 713 1705 706ZM1685 816 1702 782 1704 782 1728 790 1709 827 1686 818ZM1634 788 1636 788 1658 796 1674 828 1673 830 1651 821ZM1634 788 1652 751 1675 759 1676 761 1658 796 1656 796ZM1687 751 1688 749 1711 756 1728 790 1726 790 1702 782ZM1683 890 1700 856 1702 856 1725 866 1706 902 1684 892ZM1632 863 1634 863 1656 873 1672 904 1671 906 1649 895ZM1632 863 1650 827 1673 837 1674 838 1656 873 1654 873ZM1685 826 1686 824 1708 833 1725 866 1723 866 1700 856ZM1681 962 1698 929 1700 929 1722 940 1704 976 1681 964ZM1630 937 1632 937 1654 948 1670 979 1668 980 1647 968ZM1630 937 1648 901 1671 912 1672 914 1654 948 1652 949ZM1682 900 1684 898 1706 908 1722 940 1720 941 1698 929ZM1678 1033 1696 1000 1697 1000 1720 1013 1701 1048 1679 1035ZM1628 1009 1630 1009 1652 1022 1667 1051 1666 1053 1645 1039ZM1628 1009 1647 974 1668 987 1669 988 1652 1022 1650 1022ZM1680 972 1681 970 1704 982 1720 1013 1718 1014 1696 1000ZM1676 1103 1693 1070 1695 1070 1717 1085 1699 1119 1677 1104ZM1626 1080 1628 1080 1650 1094 1665 1123 1664 1125 1643 1109ZM1626 1080 1645 1045 1666 1059 1667 1061 1650 1094 1648 1095ZM1678 1042 1679 1041 1701 1054 1717 1085 1715 1085 1693 1070ZM1674 1171 1691 1139 1693 1139 1715 1154 1697 1189 1675 1172ZM1625 1149 1627 1149 1648 1165 1663 1193 1662 1194 1641 1178ZM1625 1149 1643 1115 1664 1131 1665 1132 1648 1165 1646 1166ZM1676 1112 1677 1110 1699 1125 1715 1154 1713 1155 1691 1139Z" fill="#0000f8"/></svg>
<div style="left:517px;top:1326px;width:1525px;height:2px;background:#ffffff;"></div>
<div style="left:2040px;top:194px;width:2px;height:1134px;background:#ffffff;"></div>
<div style="left:517px;top:1328px;width:1527px;height:2px;background:#888888;"></div>
<svg style="position:absolute;left:1173px;top:1334px" width="16" height="10" viewBox="0 0 16 10" shape-rendering="crispEdges"><path d="M1 1L8 8L15 1" stroke="#000" stroke-width="2.6" fill="none" shape-rendering="geometricPrecision"/></svg>
<svg style="position:absolute;left:1373px;top:1334px" width="16" height="10" viewBox="0 0 16 10" shape-rendering="crispEdges"><path d="M1 1L8 8L15 1" stroke="#000" stroke-width="2.6" fill="none" shape-rendering="geometricPrecision"/></svg>
<svg style="position:absolute;left:1194px;top:1336px" width="181" height="4" viewBox="0 0 181 4" shape-rendering="crispEdges"><rect x="0" y="0" width="2" height="2" fill="#fff"/><rect x="3" y="2" width="2" height="2" fill="#8c8c8c"/><rect x="6" y="0" width="2" height="2" fill="#fff"/><rect x="9" y="2" width="2" height="2" fill="#8c8c8c"/><rect x="12" y="0" width="2" height="2" fill="#fff"/><rect x="15" y="2" width="2" height="2" fill="#8c8c8c"/><rect x="18" y="0" width="2" height="2" fill="#fff"/><rect x="21" y="2" width="2" height="2" fill="#8c8c8c"/><rect x="24" y="0" width="2" height="2" fill="#fff"/><rect x="27" y="2" width="2" height="2" fill="#8c8c8c"/><rect x="30" y="0" width="2" height="2" fill="#fff"/><rect x="33" y="2" width="2" height="2" fill="#8c8c8c"/><rect x="36" y="0" width="2" height="2" fill="#fff"/><rect x="39" y="2" width="2" height="2" fill="#8c8c8c"/><rect x="42" y="0" width="2" height="2" fill="#fff"/><rect x="45" y="2" width="2" height="2" fill="#8c8c8c"/><rect x="48" y="0" width="2" height="2" fill="#fff"/><rect x="51" y="2" width="2" height="2" fill="#8c8c8c"/><rect x="54" y="0" width="2" height="2" fill="#fff"/><rect x="57" y="2" width="2" height="2" fill="#8c8c8c"/><rect x="60" y="0" width="2" height="2" fill="#fff"/><rect x="63" y="2" width="2" height="2" fill="#8c8c8c"/><rect x="66" y="0" width="2" height="2" fill="#fff"/><rect x="69" y="2" width="2" height="2" fill="#8c8c8c"/><rect x="72" y="0" width="2" height="2" fill="#fff"/><rect x="75" y="2" width="2" height="2" fill="#8c8c8c"/><rect x="78" y="0" width="2" height="2" fill="#fff"/><rect x="81" y="2" width="2" height="2" fill="#8c8c8c"/><rect x="84" y="0" width="2" height="2" fill="#fff"/><rect x="87" y="2" width="2" height="2" fill="#8c8c8c"/><rect x="90" y="0" width="2" height="2" fill="#fff"/><rect x="93" y="2" width="2" height="2" fill="#8c8c8c"/><rect x="96" y="0" width="2" height="2" fill="#fff"/><rect x="99" y="2" width="2" height="2" fill="#8c8c8c"/><rect x="102" y="0" width="2" height="2" fill="#fff"/><rect x="105" y="2" width="2" height="2" fill="#8c8c8c"/><rect x="108" y="0" width="2" height="2" fill="#fff"/><rect x="111" y="2" width="2" height="2" fill="#8c8c8c"/><rect x="114" y="0" width="2" height="2" fill="#fff"/><rect x="117" y="2" width="2" height="2" fill="#8c8c8c"/><rect x="120" y="0" width="2" height="2" fill="#fff"/><rect x="123" y="2" width="2" height="2" fill="#8c8c8c"/><rect x="126" y="0" width="2" height="2" fill="#fff"/><rect x="129" y="2" width="2" height="2" fill="#8c8c8c"/><rect x="132" y="0" width="2" height="2" fill="#fff"/><rect x="135" y="2" width="2" height="2" fill="#8c8c8c"/><rect x="138" y="0" width="2" height="2" fill="#fff"/><rect x="141" y="2" width="2" height="2" fill="#8c8c8c"/><rect x="144" y="0" width="2" height="2" fill="#fff"/><rect x="147" y="2" width="2" height="2" fill="#8c8c8c"/><rect x="150" y="0" width="2" height="2" fill="#fff"/><rect x="153" y="2" width="2" height="2" fill="#8c8c8c"/><rect x="156" y="0" width="2" height="2" fill="#fff"/><rect x="159" y="2" width="2" height="2" fill="#8c8c8c"/><rect x="162" y="0" width="2" height="2" fill="#fff"/><rect x="165" y="2" width="2" height="2" fill="#8c8c8c"/><rect x="168" y="0" width="2" height="2" fill="#fff"/><rect x="171" y="2" width="2" height="2" fill="#8c8c8c"/><rect x="174" y="0" width="2" height="2" fill="#fff"/><rect x="177" y="2" width="2" height="2" fill="#8c8c8c"/></svg>
<svg style="position:absolute;left:516px;top:1346px" width="142" height="42" viewBox="0 0 142 42" shape-rendering="crispEdges"><rect x="0" y="0" width="142" height="42" fill="#e5e5e5"/><rect x="4" y="0" width="135" height="2" fill="#fff"/><rect x="0" y="4" width="2" height="38" fill="#fff"/><path d="M0 4L4 0L4 2L2 4Z" fill="#fff" shape-rendering="geometricPrecision"/><rect x="140" y="3" width="2" height="39" fill="#888888"/></svg>
<div class="t" style="left:528px;top:1354px;font-size:24px;color:#000;letter-spacing:0.7px;">Command</div>
<div style="left:658px;top:1386px;width:1386px;height:2px;background:#ffffff;"></div>
<div style="left:516px;top:1388px;width:2px;height:150px;background:#ffffff;"></div>
<div style="left:2042px;top:1387px;width:2px;height:151px;background:#888888;"></div>
<div style="left:516px;top:1536px;width:1528px;height:2px;background:#888888;"></div>
<div class="t" style="left:535px;top:1406px;font-size:24px;color:#000;letter-spacing:0.7px;">Command (local):</div>
<div style="left:754px;top:1398px;width:1270px;height:42px;background:#fff;"></div>
<div style="left:754px;top:1398px;width:1267px;height:2px;background:#888888;"></div>
<div style="left:754px;top:1398px;width:2px;height:39px;background:#888888;"></div>
<div style="left:1990px;top:1401px;width:31px;height:36px;background:#888888;"></div>
<div style="left:1992px;top:1403px;width:27px;height:32px;background:#e5e5e5;"></div>
<svg style="position:absolute;left:1998px;top:1414px" width="14" height="8" viewBox="0 0 14 8" shape-rendering="crispEdges"><path d="M0 0L14 0L7.0 8Z" fill="#000" shape-rendering="geometricPrecision"/></svg>
<div style="left:526px;top:1454px;width:1507px;height:74px;background:#fff;"></div>
<div style="left:526px;top:1454px;width:1505px;height:2px;background:#888888;"></div>
<div style="left:526px;top:1454px;width:2px;height:72px;background:#888888;"></div>
<div style="left:528px;top:1456px;width:1501px;height:6px;background:#e5e5e5;"></div>
<div style="left:528px;top:1456px;width:6px;height:68px;background:#e5e5e5;"></div>
<div style="left:528px;top:1524px;width:1503px;height:2px;background:#e5e5e5;"></div>
<div style="left:2029px;top:1456px;width:2px;height:70px;background:#e5e5e5;"></div>
<div style="left:0px;top:1542px;width:670px;height:2px;background:#888888;"></div>
<div style="left:0px;top:1542px;width:2px;height:36px;background:#888888;"></div>
<div style="left:668px;top:1544px;width:2px;height:36px;background:#ffffff;"></div>
<div style="left:0px;top:1578px;width:670px;height:2px;background:#ffffff;"></div>
<div style="left:674px;top:1542px;width:200px;height:2px;background:#888888;"></div>
<div style="left:674px;top:1542px;width:2px;height:36px;background:#888888;"></div>
<div style="left:872px;top:1544px;width:2px;height:36px;background:#ffffff;"></div>
<div style="left:674px;top:1578px;width:200px;height:2px;background:#ffffff;"></div>
<div style="left:878px;top:1542px;width:200px;height:2px;background:#888888;"></div>
<div style="left:878px;top:1542px;width:2px;height:36px;background:#888888;"></div>
<div style="left:1076px;top:1544px;width:2px;height:36px;background:#ffffff;"></div>
<div style="left:878px;top:1578px;width:200px;height:2px;background:#ffffff;"></div>
<div style="left:1082px;top:1542px;width:966px;height:2px;background:#888888;"></div>
<div style="left:1082px;top:1542px;width:2px;height:36px;background:#888888;"></div>
<div style="left:2046px;top:1544px;width:2px;height:36px;background:#ffffff;"></div>
<div style="left:1082px;top:1578px;width:966px;height:2px;background:#ffffff;"></div>
<svg style="position:absolute;left:2018px;top:1550px" width="30" height="30" viewBox="0 0 30 30" shape-rendering="crispEdges"><path d="M28 4L4 28M28 12L12 28M28 20L20 28" stroke="#fff" stroke-width="2.5" shape-rendering="geometricPrecision"/><path d="M28 7L7 28M28 15L15 28M28 23L23 28" stroke="#8a8a8a" stroke-width="2" shape-rendering="geometricPrecision"/></svg>
</div></body></html>
